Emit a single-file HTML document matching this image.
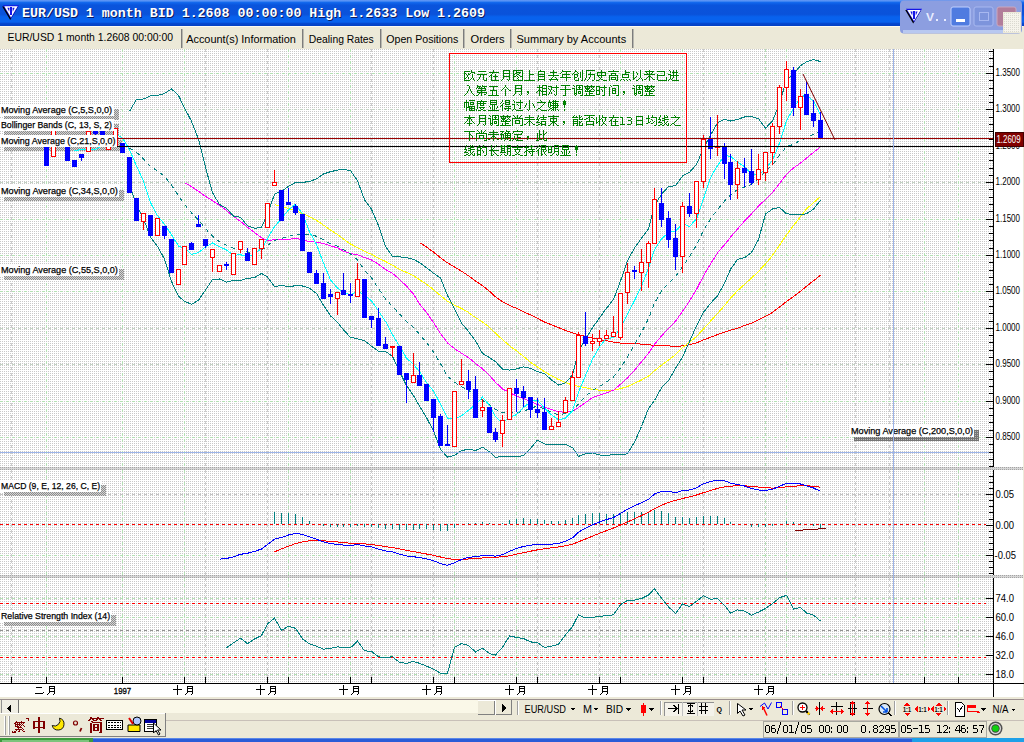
<!DOCTYPE html><html><head><meta charset="utf-8"><style>html,body{margin:0;padding:0;width:1024px;height:742px;overflow:hidden;background:#ece9d8}svg{display:block}</style></head><body>
<svg width="1024" height="742" viewBox="0 0 1024 742" shape-rendering="crispEdges">
<defs>
<pattern id="dots" width="2" height="2" patternUnits="userSpaceOnUse"><rect width="2" height="2" fill="#fff"/><rect x="0" y="1" width="1" height="1" fill="#c8c8c8"/></pattern>
<pattern id="shade" width="2" height="2" patternUnits="userSpaceOnUse"><rect width="2" height="2" fill="#c8c8c8"/><rect x="0" y="0" width="1" height="1" fill="#8c8c8c"/><rect x="1" y="1" width="1" height="1" fill="#8c8c8c"/></pattern>
<pattern id="shadeL" width="2" height="2" patternUnits="userSpaceOnUse"><rect width="2" height="2" fill="#d4d4d4"/><rect x="0" y="0" width="1" height="1" fill="#8c8c8c"/><rect x="1" y="1" width="1" height="1" fill="#8c8c8c"/></pattern>
<pattern id="shadeD" width="2" height="2" patternUnits="userSpaceOnUse"><rect width="2" height="2" fill="#747474"/><rect x="1" y="1" width="1" height="1" fill="#b8b8b8"/></pattern>
<pattern id="sepdots" width="2" height="1" patternUnits="userSpaceOnUse"><rect width="1" height="1" fill="#a4a4a4"/></pattern>
<linearGradient id="tb" x1="0" y1="0" x2="0" y2="26" gradientUnits="userSpaceOnUse">
<stop offset="0" stop-color="#6a9cf6"/><stop offset="0.06" stop-color="#3a82f2"/><stop offset="0.1" stop-color="#1066ec"/><stop offset="0.2" stop-color="#0a54dc"/><stop offset="0.55" stop-color="#0a52da"/><stop offset="0.65" stop-color="#0862ee"/><stop offset="0.85" stop-color="#0862ee"/><stop offset="0.9" stop-color="#0548d0"/><stop offset="1" stop-color="#0440c4"/></linearGradient>
</defs>
<rect x="0" y="0" width="1024" height="26" fill="url(#tb)" />
<path d="M2.2 6.4h16l-8 13.5z" fill="#000" shape-rendering="auto"/>
<path d="M3 5.2h16l-8 13.5z" fill="#1414e6" shape-rendering="auto"/>
<path d="M4.3 6.300000000000001h13.4l-6.7 11.2z" fill="#fff" shape-rendering="auto"/>
<path d="M7.3 7.800000000000001h2.2l-0.3 4zM14.7 7.800000000000001h-2.2l0.3 4z" fill="#1414e6" shape-rendering="auto"/>
<rect x="10.4" y="7.4" width="1.2" height="8" fill="#1414e6" />
<text x="23" y="18" font-family="Liberation Mono" font-size="13.5" font-weight="bold" fill="#0a1a60" text-anchor="start" textLength="463" lengthAdjust="spacingAndGlyphs" >EUR/USD 1 month BID 1.2608 00:00:00 High 1.2633 Low 1.2609</text>
<text x="22" y="17" font-family="Liberation Mono" font-size="13.5" font-weight="bold" fill="#fff" text-anchor="start" textLength="463" lengthAdjust="spacingAndGlyphs" >EUR/USD 1 month BID 1.2608 00:00:00 High 1.2633 Low 1.2609</text>
<rect x="0" y="26" width="1024" height="23" fill="#ece9d8" />
<rect x="0" y="26" width="1024" height="1" fill="#fbfaf2" />
<text x="7.5" y="41" font-family="Liberation Sans" font-size="11" font-weight="normal" fill="#000" text-anchor="start" textLength="165.5" lengthAdjust="spacingAndGlyphs" >EUR/USD 1 month 1.2608 00:00:00</text>
<rect x="181" y="29" width="1" height="19" fill="#7c7c7c" />
<rect x="182" y="29" width="1" height="19" fill="#b8b8b0" />
<text x="186.2" y="43" font-family="Liberation Sans" font-size="11" font-weight="normal" fill="#000" text-anchor="start" textLength="109.7" lengthAdjust="spacingAndGlyphs" >Account(s) Information</text>
<rect x="302" y="29" width="1" height="19" fill="#7c7c7c" />
<rect x="303" y="29" width="1" height="19" fill="#b8b8b0" />
<text x="308.8" y="43" font-family="Liberation Sans" font-size="11" font-weight="normal" fill="#000" text-anchor="start" textLength="65" lengthAdjust="spacingAndGlyphs" >Dealing Rates</text>
<rect x="380" y="29" width="1" height="19" fill="#7c7c7c" />
<rect x="381" y="29" width="1" height="19" fill="#b8b8b0" />
<text x="386.3" y="43" font-family="Liberation Sans" font-size="11" font-weight="normal" fill="#000" text-anchor="start" textLength="72" lengthAdjust="spacingAndGlyphs" >Open Positions</text>
<rect x="463" y="29" width="1" height="19" fill="#7c7c7c" />
<rect x="464" y="29" width="1" height="19" fill="#b8b8b0" />
<text x="470.6" y="43" font-family="Liberation Sans" font-size="11" font-weight="normal" fill="#000" text-anchor="start" textLength="34" lengthAdjust="spacingAndGlyphs" >Orders</text>
<rect x="510" y="29" width="1" height="19" fill="#7c7c7c" />
<rect x="511" y="29" width="1" height="19" fill="#b8b8b0" />
<text x="516.5" y="43" font-family="Liberation Sans" font-size="11" font-weight="normal" fill="#000" text-anchor="start" textLength="109.7" lengthAdjust="spacingAndGlyphs" >Summary by Accounts</text>
<rect x="632" y="29" width="1" height="19" fill="#7c7c7c" />
<rect x="633" y="29" width="1" height="19" fill="#b8b8b0" />
<rect x="0" y="49" width="993" height="634" fill="url(#dots)" />
<rect x="993" y="49" width="31" height="648" fill="#fff" />
<rect x="0" y="684" width="993" height="13" fill="#fff" />
<rect x="1023" y="26" width="1" height="672" fill="#ece9d8" />
<line x1="46.5" y1="49" x2="46.5" y2="467" stroke="#b4e2b4" stroke-width="1" stroke-dasharray="3,3"/>
<line x1="46.5" y1="470" x2="46.5" y2="575" stroke="#b4e2b4" stroke-width="1" stroke-dasharray="3,3"/>
<line x1="46.5" y1="578" x2="46.5" y2="683" stroke="#b4e2b4" stroke-width="1" stroke-dasharray="3,3"/>
<line x1="122.5" y1="49" x2="122.5" y2="467" stroke="#b4e2b4" stroke-width="1" stroke-dasharray="3,3"/>
<line x1="122.5" y1="470" x2="122.5" y2="575" stroke="#b4e2b4" stroke-width="1" stroke-dasharray="3,3"/>
<line x1="122.5" y1="578" x2="122.5" y2="683" stroke="#b4e2b4" stroke-width="1" stroke-dasharray="3,3"/>
<line x1="184.5" y1="49" x2="184.5" y2="467" stroke="#b4e2b4" stroke-width="1" stroke-dasharray="3,3"/>
<line x1="184.5" y1="470" x2="184.5" y2="575" stroke="#b4e2b4" stroke-width="1" stroke-dasharray="3,3"/>
<line x1="184.5" y1="578" x2="184.5" y2="683" stroke="#b4e2b4" stroke-width="1" stroke-dasharray="3,3"/>
<line x1="288.5" y1="49" x2="288.5" y2="467" stroke="#b4e2b4" stroke-width="1" stroke-dasharray="3,3"/>
<line x1="288.5" y1="470" x2="288.5" y2="575" stroke="#b4e2b4" stroke-width="1" stroke-dasharray="3,3"/>
<line x1="288.5" y1="578" x2="288.5" y2="683" stroke="#b4e2b4" stroke-width="1" stroke-dasharray="3,3"/>
<line x1="350.5" y1="49" x2="350.5" y2="467" stroke="#b4e2b4" stroke-width="1" stroke-dasharray="3,3"/>
<line x1="350.5" y1="470" x2="350.5" y2="575" stroke="#b4e2b4" stroke-width="1" stroke-dasharray="3,3"/>
<line x1="350.5" y1="578" x2="350.5" y2="683" stroke="#b4e2b4" stroke-width="1" stroke-dasharray="3,3"/>
<line x1="454.5" y1="49" x2="454.5" y2="467" stroke="#b4e2b4" stroke-width="1" stroke-dasharray="3,3"/>
<line x1="454.5" y1="470" x2="454.5" y2="575" stroke="#b4e2b4" stroke-width="1" stroke-dasharray="3,3"/>
<line x1="454.5" y1="578" x2="454.5" y2="683" stroke="#b4e2b4" stroke-width="1" stroke-dasharray="3,3"/>
<line x1="516.5" y1="49" x2="516.5" y2="467" stroke="#b4e2b4" stroke-width="1" stroke-dasharray="3,3"/>
<line x1="516.5" y1="470" x2="516.5" y2="575" stroke="#b4e2b4" stroke-width="1" stroke-dasharray="3,3"/>
<line x1="516.5" y1="578" x2="516.5" y2="683" stroke="#b4e2b4" stroke-width="1" stroke-dasharray="3,3"/>
<line x1="620.5" y1="49" x2="620.5" y2="467" stroke="#b4e2b4" stroke-width="1" stroke-dasharray="3,3"/>
<line x1="620.5" y1="470" x2="620.5" y2="575" stroke="#b4e2b4" stroke-width="1" stroke-dasharray="3,3"/>
<line x1="620.5" y1="578" x2="620.5" y2="683" stroke="#b4e2b4" stroke-width="1" stroke-dasharray="3,3"/>
<line x1="682.5" y1="49" x2="682.5" y2="467" stroke="#b4e2b4" stroke-width="1" stroke-dasharray="3,3"/>
<line x1="682.5" y1="470" x2="682.5" y2="575" stroke="#b4e2b4" stroke-width="1" stroke-dasharray="3,3"/>
<line x1="682.5" y1="578" x2="682.5" y2="683" stroke="#b4e2b4" stroke-width="1" stroke-dasharray="3,3"/>
<line x1="765.5" y1="49" x2="765.5" y2="467" stroke="#b4e2b4" stroke-width="1" stroke-dasharray="3,3"/>
<line x1="765.5" y1="470" x2="765.5" y2="575" stroke="#b4e2b4" stroke-width="1" stroke-dasharray="3,3"/>
<line x1="765.5" y1="578" x2="765.5" y2="683" stroke="#b4e2b4" stroke-width="1" stroke-dasharray="3,3"/>
<line x1="786.5" y1="49" x2="786.5" y2="467" stroke="#b4e2b4" stroke-width="1" stroke-dasharray="3,3"/>
<line x1="786.5" y1="470" x2="786.5" y2="575" stroke="#b4e2b4" stroke-width="1" stroke-dasharray="3,3"/>
<line x1="786.5" y1="578" x2="786.5" y2="683" stroke="#b4e2b4" stroke-width="1" stroke-dasharray="3,3"/>
<line x1="924.5" y1="49" x2="924.5" y2="467" stroke="#b4e2b4" stroke-width="1" stroke-dasharray="3,3"/>
<line x1="924.5" y1="470" x2="924.5" y2="575" stroke="#b4e2b4" stroke-width="1" stroke-dasharray="3,3"/>
<line x1="924.5" y1="578" x2="924.5" y2="683" stroke="#b4e2b4" stroke-width="1" stroke-dasharray="3,3"/>
<line x1="958.5" y1="49" x2="958.5" y2="467" stroke="#b4e2b4" stroke-width="1" stroke-dasharray="3,3"/>
<line x1="958.5" y1="470" x2="958.5" y2="575" stroke="#b4e2b4" stroke-width="1" stroke-dasharray="3,3"/>
<line x1="958.5" y1="578" x2="958.5" y2="683" stroke="#b4e2b4" stroke-width="1" stroke-dasharray="3,3"/>
<line x1="11.5" y1="49" x2="11.5" y2="467" stroke="#cccccc" stroke-width="1" stroke-dasharray="3,3"/>
<line x1="11.5" y1="470" x2="11.5" y2="575" stroke="#cccccc" stroke-width="1" stroke-dasharray="3,3"/>
<line x1="11.5" y1="578" x2="11.5" y2="683" stroke="#cccccc" stroke-width="1" stroke-dasharray="3,3"/>
<line x1="205.5" y1="49" x2="205.5" y2="467" stroke="#cccccc" stroke-width="1" stroke-dasharray="3,3"/>
<line x1="205.5" y1="470" x2="205.5" y2="575" stroke="#cccccc" stroke-width="1" stroke-dasharray="3,3"/>
<line x1="205.5" y1="578" x2="205.5" y2="683" stroke="#cccccc" stroke-width="1" stroke-dasharray="3,3"/>
<line x1="267.5" y1="49" x2="267.5" y2="467" stroke="#cccccc" stroke-width="1" stroke-dasharray="3,3"/>
<line x1="267.5" y1="470" x2="267.5" y2="575" stroke="#cccccc" stroke-width="1" stroke-dasharray="3,3"/>
<line x1="267.5" y1="578" x2="267.5" y2="683" stroke="#cccccc" stroke-width="1" stroke-dasharray="3,3"/>
<line x1="371.5" y1="49" x2="371.5" y2="467" stroke="#cccccc" stroke-width="1" stroke-dasharray="3,3"/>
<line x1="371.5" y1="470" x2="371.5" y2="575" stroke="#cccccc" stroke-width="1" stroke-dasharray="3,3"/>
<line x1="371.5" y1="578" x2="371.5" y2="683" stroke="#cccccc" stroke-width="1" stroke-dasharray="3,3"/>
<line x1="433.5" y1="49" x2="433.5" y2="467" stroke="#cccccc" stroke-width="1" stroke-dasharray="3,3"/>
<line x1="433.5" y1="470" x2="433.5" y2="575" stroke="#cccccc" stroke-width="1" stroke-dasharray="3,3"/>
<line x1="433.5" y1="578" x2="433.5" y2="683" stroke="#cccccc" stroke-width="1" stroke-dasharray="3,3"/>
<line x1="537.5" y1="49" x2="537.5" y2="467" stroke="#cccccc" stroke-width="1" stroke-dasharray="3,3"/>
<line x1="537.5" y1="470" x2="537.5" y2="575" stroke="#cccccc" stroke-width="1" stroke-dasharray="3,3"/>
<line x1="537.5" y1="578" x2="537.5" y2="683" stroke="#cccccc" stroke-width="1" stroke-dasharray="3,3"/>
<line x1="599.5" y1="49" x2="599.5" y2="467" stroke="#cccccc" stroke-width="1" stroke-dasharray="3,3"/>
<line x1="599.5" y1="470" x2="599.5" y2="575" stroke="#cccccc" stroke-width="1" stroke-dasharray="3,3"/>
<line x1="599.5" y1="578" x2="599.5" y2="683" stroke="#cccccc" stroke-width="1" stroke-dasharray="3,3"/>
<line x1="703.5" y1="49" x2="703.5" y2="467" stroke="#cccccc" stroke-width="1" stroke-dasharray="3,3"/>
<line x1="703.5" y1="470" x2="703.5" y2="575" stroke="#cccccc" stroke-width="1" stroke-dasharray="3,3"/>
<line x1="703.5" y1="578" x2="703.5" y2="683" stroke="#cccccc" stroke-width="1" stroke-dasharray="3,3"/>
<line x1="855.5" y1="49" x2="855.5" y2="467" stroke="#cccccc" stroke-width="1" stroke-dasharray="3,3"/>
<line x1="855.5" y1="470" x2="855.5" y2="575" stroke="#cccccc" stroke-width="1" stroke-dasharray="3,3"/>
<line x1="855.5" y1="578" x2="855.5" y2="683" stroke="#cccccc" stroke-width="1" stroke-dasharray="3,3"/>
<line x1="889.5" y1="49" x2="889.5" y2="467" stroke="#cccccc" stroke-width="1" stroke-dasharray="3,3"/>
<line x1="889.5" y1="470" x2="889.5" y2="575" stroke="#cccccc" stroke-width="1" stroke-dasharray="3,3"/>
<line x1="889.5" y1="578" x2="889.5" y2="683" stroke="#cccccc" stroke-width="1" stroke-dasharray="3,3"/>
<line x1="0" y1="73.5" x2="986" y2="73.5" stroke="#b4e2b4" stroke-width="1" stroke-dasharray="3,3"/>
<line x1="0" y1="109.5" x2="986" y2="109.5" stroke="#c4d4c4" stroke-width="1" stroke-dasharray="3,3"/>
<line x1="0" y1="146.5" x2="986" y2="146.5" stroke="#b4e2b4" stroke-width="1" stroke-dasharray="3,3"/>
<line x1="0" y1="182.5" x2="986" y2="182.5" stroke="#c4d4c4" stroke-width="1" stroke-dasharray="3,3"/>
<line x1="0" y1="219.5" x2="986" y2="219.5" stroke="#b4e2b4" stroke-width="1" stroke-dasharray="3,3"/>
<line x1="0" y1="255.5" x2="986" y2="255.5" stroke="#b4e2b4" stroke-width="1" stroke-dasharray="3,3"/>
<line x1="0" y1="291.5" x2="986" y2="291.5" stroke="#b4e2b4" stroke-width="1" stroke-dasharray="3,3"/>
<line x1="0" y1="328.5" x2="986" y2="328.5" stroke="#c4d4c4" stroke-width="1" stroke-dasharray="3,3"/>
<line x1="0" y1="364.5" x2="986" y2="364.5" stroke="#c4d4c4" stroke-width="1" stroke-dasharray="3,3"/>
<line x1="0" y1="401.5" x2="986" y2="401.5" stroke="#b4e2b4" stroke-width="1" stroke-dasharray="3,3"/>
<line x1="0" y1="437.5" x2="986" y2="437.5" stroke="#b4e2b4" stroke-width="1" stroke-dasharray="3,3"/>
<svg x="0" y="49" width="993" height="418" viewBox="0 49 993 418" overflow="hidden">
<rect x="113.6" y="108.5" width="5" height="11" fill="url(#shadeL)" />
<rect x="4" y="115.5" width="109.6" height="4" fill="url(#shadeL)" />
<rect x="113.6" y="124" width="5" height="11" fill="url(#shadeL)" />
<rect x="4" y="131" width="109.6" height="4" fill="url(#shadeL)" />
<rect x="116.8" y="139.5" width="5" height="11" fill="url(#shadeL)" />
<rect x="4" y="146.5" width="112.8" height="4" fill="url(#shadeL)" />
<rect x="119" y="190" width="5" height="11" fill="url(#shadeL)" />
<rect x="4" y="197" width="115" height="4" fill="url(#shadeL)" />
<rect x="119.4" y="269" width="5" height="11" fill="url(#shadeL)" />
<rect x="4" y="276" width="115.4" height="4" fill="url(#shadeL)" />
<polyline points="419.5,242.6 426.5,246.9 433.5,252.1 440.5,257.7 447.5,262.9 454.5,267.0 461.5,271.1 468.5,275.8 475.5,280.9 482.5,285.8 489.5,291.2 495.5,296.8 502.5,301.7 509.5,305.3 516.5,308.4 523.5,311.8 530.5,314.9 537.5,318.4 544.5,322.0 551.5,324.8 558.5,327.6 565.5,330.4 572.5,332.7 578.5,334.7 585.5,336.5 592.5,338.1 599.5,339.5 606.5,340.7 613.5,342.2 620.5,343.1 627.5,343.3 634.5,343.7 641.5,344.1 648.5,344.9 654.5,345.2 661.5,345.1 668.5,345.8 675.5,346.6 682.5,345.8 689.5,344.7 696.5,342.8 703.5,339.9 710.5,337.3 717.5,334.6 724.5,332.2 730.5,330.2 737.5,328.2 744.5,325.6 751.5,323.1 758.5,319.9 765.5,316.4 772.5,312.4 779.5,307.1 786.5,301.5 793.5,296.6 800.5,291.4 806.5,286.2 813.5,280.8 820.5,275.2" fill="none" stroke="#ff0000" stroke-width="1" />
<polyline points="274.5,204.7 281.5,206.4 288.5,208.6 295.5,210.8 302.5,213.5 309.5,216.6 316.5,220.3 323.5,225.2 330.5,230.0 337.5,234.5 343.5,239.1 350.5,244.0 357.5,247.7 364.5,251.4 371.5,254.3 378.5,258.2 385.5,261.5 392.5,265.3 399.5,269.3 406.5,272.5 413.5,275.6 419.5,279.7 426.5,284.1 433.5,289.7 440.5,295.6 447.5,301.3 454.5,305.1 461.5,308.5 468.5,312.5 475.5,317.6 482.5,322.0 489.5,327.4 495.5,333.2 502.5,339.6 509.5,345.7 516.5,350.8 523.5,356.4 530.5,362.3 537.5,367.0 544.5,371.6 551.5,375.8 558.5,379.5 565.5,382.6 572.5,385.1 578.5,386.3 585.5,387.7 592.5,389.5 599.5,390.1 606.5,390.6 613.5,390.2 620.5,388.6 627.5,386.5 634.5,383.4 641.5,380.0 648.5,376.1 654.5,370.7 661.5,365.3 668.5,360.1 675.5,354.6 682.5,347.5 689.5,342.3 696.5,336.4 703.5,329.0 710.5,321.2 717.5,313.5 724.5,305.6 730.5,298.1 737.5,290.7 744.5,284.3 751.5,278.1 758.5,271.4 765.5,263.8 772.5,255.4 779.5,245.3 786.5,234.8 793.5,225.6 800.5,216.7 806.5,208.9 813.5,202.6 820.5,196.5" fill="none" stroke="#ffff00" stroke-width="1" />
<polyline points="184.5,182.6 191.5,186.6 198.5,191.3 205.5,196.4 212.5,200.7 219.5,205.4 226.5,210.5 233.5,216.4 240.5,221.5 247.5,227.2 254.5,232.5 261.5,237.8 267.5,240.3 274.5,239.8 281.5,239.8 288.5,239.4 295.5,238.3 302.5,239.8 309.5,241.6 316.5,242.1 323.5,243.5 330.5,245.8 337.5,247.9 343.5,251.1 350.5,253.5 357.5,254.9 364.5,257.4 371.5,260.0 378.5,264.3 385.5,269.4 392.5,273.4 399.5,279.4 406.5,286.1 413.5,294.2 419.5,303.9 426.5,312.4 433.5,322.5 440.5,333.6 447.5,342.9 454.5,348.6 461.5,353.2 468.5,357.6 475.5,363.4 482.5,368.9 489.5,375.5 495.5,382.3 502.5,389.0 509.5,392.4 516.5,396.0 523.5,398.5 530.5,401.4 537.5,404.6 544.5,407.2 551.5,409.5 558.5,411.7 565.5,412.4 572.5,411.4 578.5,407.5 585.5,402.6 592.5,397.7 599.5,395.1 606.5,392.9 613.5,390.2 620.5,384.3 627.5,377.9 634.5,370.2 641.5,361.8 648.5,353.3 654.5,344.3 661.5,336.0 668.5,328.5 675.5,321.2 682.5,311.4 689.5,301.1 696.5,289.4 703.5,275.9 710.5,263.9 717.5,252.9 724.5,244.8 730.5,237.2 737.5,229.0 744.5,221.1 751.5,213.8 758.5,206.1 765.5,199.3 772.5,192.4 779.5,183.6 786.5,174.4 793.5,168.0 800.5,163.1 806.5,158.1 813.5,152.4 820.5,146.8" fill="none" stroke="#ff00ff" stroke-width="1" />
<polyline points="129.5,111.4 136.5,99.4 143.5,99.0 150.5,95.9 157.5,95.4 164.5,93.5 171.5,88.9 178.5,95.4 184.5,107.9 191.5,121.3 198.5,139.3 205.5,167.4 212.5,192.8 219.5,204.5 226.5,208.2 233.5,216.2 240.5,217.3 247.5,225.7 254.5,228.3 261.5,227.5 267.5,213.8 274.5,194.3 281.5,191.2 288.5,186.4 295.5,182.4 302.5,182.4 309.5,181.5 316.5,178.9 323.5,174.0 330.5,171.7 337.5,170.1 343.5,169.4 350.5,170.5 357.5,180.8 364.5,199.7 371.5,209.3 378.5,225.7 385.5,246.5 392.5,256.4 399.5,256.8 406.5,257.6 413.5,259.3 419.5,262.6 426.5,267.7 433.5,273.2 440.5,278.0 447.5,295.5 454.5,308.7 461.5,323.1 468.5,331.4 475.5,340.8 482.5,353.4 489.5,357.7 495.5,361.6 502.5,369.2 509.5,370.1 516.5,368.9 523.5,366.8 530.5,368.4 537.5,371.7 544.5,373.7 551.5,379.9 558.5,385.0 565.5,382.8 572.5,374.9 578.5,351.2 585.5,339.1 592.5,327.8 599.5,317.8 606.5,308.3 613.5,299.4 620.5,281.1 627.5,260.7 634.5,248.0 641.5,238.3 648.5,228.7 654.5,205.9 661.5,194.2 668.5,186.7 675.5,185.5 682.5,176.0 689.5,172.3 696.5,164.5 703.5,148.3 710.5,135.0 717.5,123.0 724.5,119.2 730.5,121.0 737.5,119.4 744.5,117.0 751.5,116.6 758.5,118.6 765.5,128.3 772.5,121.0 779.5,103.3 786.5,79.7 793.5,74.0 800.5,65.6 806.5,61.9 813.5,59.5 820.5,61.6" fill="none" stroke="#008080" stroke-width="1" />
<polyline points="129.5,184.7 136.5,205.2 143.5,218.6 150.5,237.1 157.5,246.4 164.5,259.1 171.5,281.4 178.5,296.2 184.5,301.2 191.5,304.4 198.5,300.2 205.5,290.0 212.5,279.5 219.5,279.0 226.5,282.2 233.5,280.4 240.5,280.3 247.5,278.4 254.5,277.7 261.5,273.5 267.5,277.0 274.5,286.7 281.5,285.4 288.5,286.8 295.5,285.7 302.5,286.0 309.5,288.1 316.5,293.5 323.5,305.2 330.5,315.9 337.5,322.3 343.5,329.9 350.5,337.4 357.5,338.8 364.5,340.6 371.5,346.2 378.5,351.3 385.5,351.5 392.5,356.3 399.5,371.5 406.5,385.4 413.5,395.7 419.5,406.1 426.5,417.6 433.5,431.0 440.5,449.2 447.5,457.2 454.5,455.5 461.5,450.6 468.5,449.2 475.5,450.5 482.5,447.2 489.5,451.9 495.5,457.3 502.5,456.6 509.5,456.2 516.5,456.5 523.5,455.7 530.5,448.5 537.5,440.1 544.5,444.0 551.5,444.7 558.5,444.7 565.5,444.4 572.5,447.6 578.5,456.4 585.5,453.8 592.5,452.9 599.5,455.0 606.5,455.6 613.5,454.5 620.5,454.8 627.5,453.8 634.5,442.1 641.5,426.5 648.5,408.5 654.5,400.5 661.5,387.8 668.5,380.6 675.5,368.3 682.5,357.1 689.5,341.6 696.5,325.7 703.5,312.3 710.5,303.3 717.5,296.0 724.5,283.1 730.5,269.4 737.5,259.4 744.5,257.7 751.5,252.4 758.5,239.7 765.5,214.0 772.5,209.0 779.5,207.4 786.5,213.8 793.5,214.5 800.5,214.9 806.5,213.6 813.5,209.3 820.5,200.1" fill="none" stroke="#008080" stroke-width="1" />
<polyline points="129.5,148.0 136.5,152.3 143.5,158.8 150.5,166.5 157.5,170.9 164.5,176.3 171.5,185.2 178.5,195.8 184.5,204.5 191.5,212.9 198.5,219.8 205.5,228.7 212.5,236.1 219.5,241.8 226.5,245.2 233.5,248.3 240.5,248.8 247.5,252.0 254.5,253.0 261.5,250.5 267.5,245.4 274.5,240.5 281.5,238.3 288.5,236.6 295.5,234.1 302.5,234.2 309.5,234.8 316.5,236.2 323.5,239.6 330.5,243.8 337.5,246.2 343.5,249.7 350.5,254.0 357.5,259.8 364.5,270.2 371.5,277.7 378.5,288.5 385.5,299.0 392.5,306.3 399.5,314.1 406.5,321.5 413.5,327.5 419.5,334.3 426.5,342.6 433.5,352.1 440.5,363.6 447.5,376.3 454.5,382.1 461.5,386.9 468.5,390.3 475.5,395.6 482.5,400.3 489.5,404.8 495.5,409.4 502.5,412.9 509.5,413.2 516.5,412.7 523.5,411.2 530.5,408.5 537.5,405.9 544.5,408.9 551.5,412.3 558.5,414.9 565.5,413.6 572.5,411.3 578.5,403.8 585.5,396.4 592.5,390.3 599.5,386.4 606.5,381.9 613.5,376.9 620.5,368.0 627.5,357.2 634.5,345.0 641.5,332.4 648.5,318.6 654.5,303.2 661.5,291.0 668.5,283.6 675.5,276.9 682.5,266.5 689.5,256.9 696.5,245.1 703.5,230.3 710.5,219.1 717.5,209.5 724.5,201.2 730.5,195.2 737.5,189.4 744.5,187.3 751.5,184.5 758.5,179.1 765.5,171.2 772.5,165.0 779.5,155.3 786.5,146.7 793.5,144.3 800.5,140.3 806.5,137.7 813.5,134.4 820.5,130.8" fill="none" stroke="#008080" stroke-width="1" stroke-dasharray="4,4" />
<polyline points="74.5,151.0 81.5,149.3 88.5,149.9 95.5,149.3 102.5,145.2 108.5,139.5 115.5,133.8 122.5,138.1 129.5,149.8 136.5,165.9 143.5,181.1 150.5,202.6 157.5,215.6 164.5,224.4 171.5,234.8 178.5,246.0 184.5,248.2 191.5,254.3 198.5,252.6 205.5,247.0 212.5,243.0 219.5,246.7 226.5,249.9 233.5,255.3 240.5,254.7 247.5,256.9 254.5,253.7 261.5,248.6 267.5,238.6 274.5,226.7 281.5,218.7 288.5,209.9 295.5,204.3 302.5,213.8 309.5,231.8 316.5,244.4 323.5,263.1 330.5,279.9 337.5,288.1 343.5,292.4 350.5,294.7 357.5,291.1 364.5,295.3 371.5,300.8 378.5,310.9 385.5,321.4 392.5,334.7 399.5,346.1 406.5,358.2 413.5,364.3 419.5,371.7 426.5,382.5 433.5,391.0 440.5,404.2 447.5,418.1 454.5,419.5 461.5,415.8 468.5,410.3 475.5,404.7 482.5,397.1 489.5,405.3 495.5,416.8 502.5,423.0 509.5,417.4 516.5,414.6 523.5,407.6 530.5,401.7 537.5,400.0 544.5,408.2 551.5,414.8 558.5,419.8 565.5,418.0 572.5,411.0 578.5,392.1 585.5,375.5 592.5,359.2 599.5,346.8 606.5,338.3 613.5,337.8 620.5,327.7 627.5,313.9 634.5,300.6 641.5,286.1 648.5,268.2 654.5,249.5 661.5,238.9 668.5,232.5 675.5,231.1 682.5,223.8 689.5,226.5 696.5,218.9 703.5,199.0 710.5,177.6 717.5,165.6 724.5,155.6 730.5,156.3 737.5,162.1 744.5,166.7 751.5,173.9 758.5,175.2 765.5,168.7 772.5,160.2 779.5,143.4 786.5,120.7 793.5,108.3 800.5,97.2 806.5,94.8 813.5,101.2 820.5,115.0" fill="none" stroke="#00ffff" stroke-width="1" />
<rect x="46" y="146" width="1" height="20" fill="#0000ff" />
<rect x="44" y="146" width="5" height="20" fill="#0000ff" />
<rect x="53" y="128" width="1" height="29" fill="#ff0000" />
<rect x="51" y="128" width="5" height="29" fill="#ff0000" />
<rect x="52" y="129" width="3" height="27" fill="#fff" />
<rect x="60" y="136" width="1" height="10" fill="#ff0000" />
<rect x="58" y="136" width="5" height="10" fill="#ff0000" />
<rect x="59" y="137" width="3" height="8" fill="#fff" />
<rect x="67" y="147" width="1" height="14" fill="#0000ff" />
<rect x="65" y="147" width="5" height="14" fill="#0000ff" />
<rect x="74" y="160" width="1" height="7" fill="#0000ff" />
<rect x="72" y="160" width="5" height="7" fill="#0000ff" />
<rect x="81" y="154" width="1" height="7" fill="#0000ff" />
<rect x="79" y="154" width="5" height="4" fill="#0000ff" />
<rect x="88" y="131" width="1" height="21" fill="#ff0000" />
<rect x="86" y="131" width="5" height="21" fill="#ff0000" />
<rect x="87" y="132" width="3" height="19" fill="#fff" />
<rect x="95" y="131" width="1" height="7" fill="#0000ff" />
<rect x="93" y="131" width="5" height="3" fill="#0000ff" />
<rect x="102" y="130" width="1" height="11" fill="#0000ff" />
<rect x="100" y="130" width="5" height="11" fill="#0000ff" />
<rect x="108" y="137" width="1" height="13" fill="#ff0000" />
<rect x="106" y="137" width="5" height="13" fill="#ff0000" />
<rect x="107" y="138" width="3" height="11" fill="#fff" />
<rect x="115" y="128" width="1" height="18" fill="#ff0000" />
<rect x="113" y="128" width="5" height="18" fill="#ff0000" />
<rect x="114" y="129" width="3" height="16" fill="#fff" />
<rect x="122" y="143" width="1" height="10" fill="#0000ff" />
<rect x="120" y="143" width="5" height="10" fill="#0000ff" />
<rect x="129" y="157" width="1" height="36" fill="#0000ff" />
<rect x="127" y="157" width="5" height="36" fill="#0000ff" />
<rect x="136" y="198" width="1" height="23" fill="#0000ff" />
<rect x="134" y="198" width="5" height="23" fill="#0000ff" />
<rect x="143" y="213" width="1" height="17" fill="#ff0000" />
<rect x="141" y="213" width="5" height="9" fill="#ff0000" />
<rect x="142" y="214" width="3" height="7" fill="#fff" />
<rect x="150" y="215" width="1" height="21" fill="#0000ff" />
<rect x="148" y="215" width="5" height="21" fill="#0000ff" />
<rect x="157" y="218" width="1" height="18" fill="#ff0000" />
<rect x="155" y="218" width="5" height="18" fill="#ff0000" />
<rect x="156" y="219" width="3" height="16" fill="#fff" />
<rect x="164" y="226" width="1" height="13" fill="#0000ff" />
<rect x="162" y="226" width="5" height="10" fill="#0000ff" />
<rect x="171" y="239" width="1" height="34" fill="#0000ff" />
<rect x="169" y="239" width="5" height="34" fill="#0000ff" />
<rect x="178" y="269" width="1" height="16" fill="#ff0000" />
<rect x="176" y="269" width="5" height="16" fill="#ff0000" />
<rect x="177" y="270" width="3" height="14" fill="#fff" />
<rect x="184" y="246" width="1" height="19" fill="#ff0000" />
<rect x="182" y="246" width="5" height="19" fill="#ff0000" />
<rect x="183" y="247" width="3" height="17" fill="#fff" />
<rect x="191" y="242" width="1" height="8" fill="#0000ff" />
<rect x="189" y="243" width="5" height="7" fill="#0000ff" />
<rect x="198" y="215" width="1" height="12" fill="#0000ff" />
<rect x="196" y="224" width="5" height="3" fill="#0000ff" />
<rect x="205" y="239" width="1" height="9" fill="#0000ff" />
<rect x="203" y="239" width="5" height="7" fill="#0000ff" />
<rect x="212" y="249" width="1" height="23" fill="#ff0000" />
<rect x="210" y="249" width="5" height="9" fill="#ff0000" />
<rect x="211" y="250" width="3" height="7" fill="#fff" />
<rect x="219" y="265" width="1" height="7" fill="#ff0000" />
<rect x="217" y="265" width="5" height="7" fill="#ff0000" />
<rect x="218" y="266" width="3" height="5" fill="#fff" />
<rect x="226" y="262" width="1" height="8" fill="#0000ff" />
<rect x="224" y="264" width="5" height="2" fill="#0000ff" />
<rect x="233" y="253" width="1" height="22" fill="#ff0000" />
<rect x="231" y="253" width="5" height="22" fill="#ff0000" />
<rect x="232" y="254" width="3" height="20" fill="#fff" />
<rect x="240" y="241" width="1" height="12" fill="#ff0000" />
<rect x="238" y="241" width="5" height="9" fill="#ff0000" />
<rect x="239" y="242" width="3" height="7" fill="#fff" />
<rect x="247" y="248" width="1" height="13" fill="#0000ff" />
<rect x="245" y="253" width="5" height="8" fill="#0000ff" />
<rect x="254" y="248" width="1" height="17" fill="#ff0000" />
<rect x="252" y="248" width="5" height="17" fill="#ff0000" />
<rect x="253" y="249" width="3" height="15" fill="#fff" />
<rect x="261" y="239" width="1" height="20" fill="#ff0000" />
<rect x="259" y="239" width="5" height="10" fill="#ff0000" />
<rect x="260" y="240" width="3" height="8" fill="#fff" />
<rect x="267" y="203" width="1" height="25" fill="#ff0000" />
<rect x="265" y="203" width="5" height="25" fill="#ff0000" />
<rect x="266" y="204" width="3" height="23" fill="#fff" />
<rect x="274" y="170" width="1" height="16" fill="#ff0000" />
<rect x="272" y="182" width="5" height="4" fill="#ff0000" />
<rect x="273" y="183" width="3" height="2" fill="#fff" />
<rect x="281" y="190" width="1" height="31" fill="#0000ff" />
<rect x="279" y="190" width="5" height="31" fill="#0000ff" />
<rect x="288" y="188" width="1" height="17" fill="#0000ff" />
<rect x="286" y="202" width="5" height="3" fill="#0000ff" />
<rect x="295" y="204" width="1" height="11" fill="#0000ff" />
<rect x="293" y="206" width="5" height="7" fill="#0000ff" />
<rect x="302" y="214" width="1" height="37" fill="#0000ff" />
<rect x="300" y="214" width="5" height="37" fill="#0000ff" />
<rect x="309" y="252" width="1" height="21" fill="#0000ff" />
<rect x="307" y="252" width="5" height="21" fill="#0000ff" />
<rect x="316" y="270" width="1" height="14" fill="#0000ff" />
<rect x="314" y="273" width="5" height="11" fill="#0000ff" />
<rect x="323" y="273" width="1" height="26" fill="#0000ff" />
<rect x="321" y="283" width="5" height="16" fill="#0000ff" />
<rect x="330" y="289" width="1" height="15" fill="#0000ff" />
<rect x="328" y="294" width="5" height="3" fill="#0000ff" />
<rect x="337" y="292" width="1" height="23" fill="#ff0000" />
<rect x="335" y="292" width="5" height="7" fill="#ff0000" />
<rect x="336" y="293" width="3" height="5" fill="#fff" />
<rect x="343" y="273" width="1" height="22" fill="#0000ff" />
<rect x="341" y="290" width="5" height="5" fill="#0000ff" />
<rect x="350" y="283" width="1" height="20" fill="#0000ff" />
<rect x="348" y="294" width="5" height="2" fill="#0000ff" />
<rect x="357" y="263" width="1" height="34" fill="#ff0000" />
<rect x="355" y="279" width="5" height="18" fill="#ff0000" />
<rect x="356" y="280" width="3" height="16" fill="#fff" />
<rect x="364" y="279" width="1" height="39" fill="#0000ff" />
<rect x="362" y="279" width="5" height="39" fill="#0000ff" />
<rect x="371" y="316" width="1" height="12" fill="#0000ff" />
<rect x="369" y="316" width="5" height="4" fill="#0000ff" />
<rect x="378" y="308" width="1" height="38" fill="#0000ff" />
<rect x="376" y="318" width="5" height="28" fill="#0000ff" />
<rect x="385" y="337" width="1" height="12" fill="#0000ff" />
<rect x="383" y="344" width="5" height="5" fill="#0000ff" />
<rect x="392" y="346" width="1" height="11" fill="#ff0000" />
<rect x="390" y="346" width="5" height="2" fill="#ff0000" />
<rect x="399" y="346" width="1" height="29" fill="#0000ff" />
<rect x="397" y="346" width="5" height="29" fill="#0000ff" />
<rect x="406" y="373" width="1" height="30" fill="#0000ff" />
<rect x="404" y="373" width="5" height="7" fill="#0000ff" />
<rect x="413" y="353" width="1" height="30" fill="#ff0000" />
<rect x="411" y="375" width="5" height="8" fill="#ff0000" />
<rect x="412" y="376" width="3" height="6" fill="#fff" />
<rect x="419" y="362" width="1" height="24" fill="#0000ff" />
<rect x="417" y="375" width="5" height="11" fill="#0000ff" />
<rect x="426" y="384" width="1" height="17" fill="#0000ff" />
<rect x="424" y="384" width="5" height="17" fill="#0000ff" />
<rect x="433" y="399" width="1" height="33" fill="#0000ff" />
<rect x="431" y="399" width="5" height="19" fill="#0000ff" />
<rect x="440" y="414" width="1" height="32" fill="#0000ff" />
<rect x="438" y="416" width="5" height="30" fill="#0000ff" />
<rect x="447" y="425" width="1" height="21" fill="#0000ff" />
<rect x="445" y="444" width="5" height="2" fill="#0000ff" />
<rect x="454" y="391" width="1" height="56" fill="#ff0000" />
<rect x="452" y="391" width="5" height="56" fill="#ff0000" />
<rect x="453" y="392" width="3" height="54" fill="#fff" />
<rect x="461" y="359" width="1" height="26" fill="#ff0000" />
<rect x="459" y="381" width="5" height="4" fill="#ff0000" />
<rect x="460" y="382" width="3" height="2" fill="#fff" />
<rect x="468" y="370" width="1" height="29" fill="#0000ff" />
<rect x="466" y="381" width="5" height="9" fill="#0000ff" />
<rect x="475" y="376" width="1" height="42" fill="#0000ff" />
<rect x="473" y="389" width="5" height="29" fill="#0000ff" />
<rect x="482" y="399" width="1" height="18" fill="#ff0000" />
<rect x="480" y="407" width="5" height="4" fill="#ff0000" />
<rect x="481" y="408" width="3" height="2" fill="#fff" />
<rect x="489" y="407" width="1" height="26" fill="#0000ff" />
<rect x="487" y="407" width="5" height="26" fill="#0000ff" />
<rect x="495" y="428" width="1" height="14" fill="#0000ff" />
<rect x="493" y="432" width="5" height="8" fill="#0000ff" />
<rect x="502" y="415" width="1" height="32" fill="#ff0000" />
<rect x="500" y="420" width="5" height="14" fill="#ff0000" />
<rect x="501" y="421" width="3" height="12" fill="#fff" />
<rect x="509" y="388" width="1" height="32" fill="#ff0000" />
<rect x="507" y="388" width="5" height="32" fill="#ff0000" />
<rect x="508" y="389" width="3" height="30" fill="#fff" />
<rect x="516" y="379" width="1" height="33" fill="#0000ff" />
<rect x="514" y="388" width="5" height="6" fill="#0000ff" />
<rect x="523" y="386" width="1" height="21" fill="#0000ff" />
<rect x="521" y="391" width="5" height="7" fill="#0000ff" />
<rect x="530" y="397" width="1" height="21" fill="#0000ff" />
<rect x="528" y="397" width="5" height="13" fill="#0000ff" />
<rect x="537" y="398" width="1" height="20" fill="#0000ff" />
<rect x="535" y="409" width="5" height="4" fill="#0000ff" />
<rect x="544" y="398" width="1" height="32" fill="#0000ff" />
<rect x="542" y="412" width="5" height="18" fill="#0000ff" />
<rect x="551" y="418" width="1" height="12" fill="#ff0000" />
<rect x="549" y="426" width="5" height="4" fill="#ff0000" />
<rect x="550" y="427" width="3" height="2" fill="#fff" />
<rect x="558" y="411" width="1" height="16" fill="#ff0000" />
<rect x="556" y="422" width="5" height="5" fill="#ff0000" />
<rect x="557" y="423" width="3" height="3" fill="#fff" />
<rect x="565" y="397" width="1" height="16" fill="#ff0000" />
<rect x="563" y="400" width="5" height="13" fill="#ff0000" />
<rect x="564" y="401" width="3" height="11" fill="#fff" />
<rect x="572" y="371" width="1" height="30" fill="#ff0000" />
<rect x="570" y="377" width="5" height="24" fill="#ff0000" />
<rect x="571" y="378" width="3" height="22" fill="#fff" />
<rect x="578" y="332" width="1" height="46" fill="#ff0000" />
<rect x="576" y="335" width="5" height="43" fill="#ff0000" />
<rect x="577" y="336" width="3" height="41" fill="#fff" />
<rect x="585" y="312" width="1" height="34" fill="#0000ff" />
<rect x="583" y="336" width="5" height="8" fill="#0000ff" />
<rect x="592" y="334" width="1" height="17" fill="#ff0000" />
<rect x="590" y="341" width="5" height="3" fill="#ff0000" />
<rect x="591" y="342" width="3" height="1" fill="#fff" />
<rect x="599" y="330" width="1" height="16" fill="#ff0000" />
<rect x="597" y="338" width="5" height="4" fill="#ff0000" />
<rect x="598" y="339" width="3" height="2" fill="#fff" />
<rect x="606" y="330" width="1" height="9" fill="#ff0000" />
<rect x="604" y="335" width="5" height="4" fill="#ff0000" />
<rect x="605" y="336" width="3" height="2" fill="#fff" />
<rect x="613" y="316" width="1" height="21" fill="#ff0000" />
<rect x="611" y="332" width="5" height="5" fill="#ff0000" />
<rect x="612" y="333" width="3" height="3" fill="#fff" />
<rect x="620" y="293" width="1" height="47" fill="#ff0000" />
<rect x="618" y="293" width="5" height="45" fill="#ff0000" />
<rect x="619" y="294" width="3" height="43" fill="#fff" />
<rect x="627" y="263" width="1" height="41" fill="#ff0000" />
<rect x="625" y="272" width="5" height="21" fill="#ff0000" />
<rect x="626" y="273" width="3" height="19" fill="#fff" />
<rect x="634" y="266" width="1" height="13" fill="#0000ff" />
<rect x="632" y="270" width="5" height="2" fill="#0000ff" />
<rect x="641" y="249" width="1" height="42" fill="#ff0000" />
<rect x="639" y="262" width="5" height="11" fill="#ff0000" />
<rect x="640" y="263" width="3" height="9" fill="#fff" />
<rect x="648" y="241" width="1" height="47" fill="#ff0000" />
<rect x="646" y="243" width="5" height="20" fill="#ff0000" />
<rect x="647" y="244" width="3" height="18" fill="#fff" />
<rect x="654" y="188" width="1" height="56" fill="#ff0000" />
<rect x="652" y="199" width="5" height="45" fill="#ff0000" />
<rect x="653" y="200" width="3" height="43" fill="#fff" />
<rect x="661" y="188" width="1" height="39" fill="#0000ff" />
<rect x="659" y="203" width="5" height="17" fill="#0000ff" />
<rect x="668" y="211" width="1" height="37" fill="#0000ff" />
<rect x="666" y="218" width="5" height="22" fill="#0000ff" />
<rect x="675" y="224" width="1" height="46" fill="#0000ff" />
<rect x="673" y="238" width="5" height="19" fill="#0000ff" />
<rect x="682" y="202" width="1" height="71" fill="#ff0000" />
<rect x="680" y="206" width="5" height="51" fill="#ff0000" />
<rect x="681" y="207" width="3" height="49" fill="#fff" />
<rect x="689" y="193" width="1" height="24" fill="#0000ff" />
<rect x="687" y="206" width="5" height="8" fill="#0000ff" />
<rect x="696" y="181" width="1" height="47" fill="#ff0000" />
<rect x="694" y="181" width="5" height="33" fill="#ff0000" />
<rect x="695" y="182" width="3" height="31" fill="#fff" />
<rect x="703" y="135" width="1" height="53" fill="#ff0000" />
<rect x="701" y="139" width="5" height="43" fill="#ff0000" />
<rect x="702" y="140" width="3" height="41" fill="#fff" />
<rect x="710" y="117" width="1" height="42" fill="#0000ff" />
<rect x="708" y="139" width="5" height="10" fill="#0000ff" />
<rect x="717" y="115" width="1" height="41" fill="#ff0000" />
<rect x="715" y="146" width="5" height="2" fill="#ff0000" />
<rect x="724" y="143" width="1" height="36" fill="#0000ff" />
<rect x="722" y="147" width="5" height="17" fill="#0000ff" />
<rect x="730" y="154" width="1" height="46" fill="#0000ff" />
<rect x="728" y="162" width="5" height="23" fill="#0000ff" />
<rect x="737" y="161" width="1" height="38" fill="#ff0000" />
<rect x="735" y="168" width="5" height="17" fill="#ff0000" />
<rect x="736" y="169" width="3" height="15" fill="#fff" />
<rect x="744" y="158" width="1" height="29" fill="#0000ff" />
<rect x="742" y="168" width="5" height="5" fill="#0000ff" />
<rect x="751" y="149" width="1" height="36" fill="#0000ff" />
<rect x="749" y="171" width="5" height="12" fill="#0000ff" />
<rect x="758" y="154" width="1" height="31" fill="#ff0000" />
<rect x="756" y="169" width="5" height="11" fill="#ff0000" />
<rect x="757" y="170" width="3" height="9" fill="#fff" />
<rect x="765" y="152" width="1" height="29" fill="#ff0000" />
<rect x="763" y="152" width="5" height="21" fill="#ff0000" />
<rect x="764" y="153" width="3" height="19" fill="#fff" />
<rect x="772" y="123" width="1" height="42" fill="#ff0000" />
<rect x="770" y="126" width="5" height="27" fill="#ff0000" />
<rect x="771" y="127" width="3" height="25" fill="#fff" />
<rect x="779" y="85" width="1" height="49" fill="#ff0000" />
<rect x="777" y="87" width="5" height="40" fill="#ff0000" />
<rect x="778" y="88" width="3" height="38" fill="#fff" />
<rect x="786" y="61" width="1" height="40" fill="#ff0000" />
<rect x="784" y="69" width="5" height="19" fill="#ff0000" />
<rect x="785" y="70" width="3" height="17" fill="#fff" />
<rect x="793" y="67" width="1" height="49" fill="#0000ff" />
<rect x="791" y="70" width="5" height="38" fill="#0000ff" />
<rect x="800" y="89" width="1" height="41" fill="#ff0000" />
<rect x="798" y="96" width="5" height="12" fill="#ff0000" />
<rect x="799" y="97" width="3" height="10" fill="#fff" />
<rect x="806" y="81" width="1" height="34" fill="#0000ff" />
<rect x="804" y="94" width="5" height="21" fill="#0000ff" />
<rect x="813" y="100" width="1" height="27" fill="#0000ff" />
<rect x="811" y="113" width="5" height="8" fill="#0000ff" />
<rect x="820" y="112" width="1" height="27" fill="#0000ff" />
<rect x="818" y="120" width="5" height="19" fill="#0000ff" />
</svg>
<rect x="0" y="138" width="993" height="1" fill="#980000" />
<rect x="0" y="146" width="993" height="1" fill="#000" />
<rect x="0" y="452" width="993" height="1" fill="#9cb4ea" />
<line x1="803" y1="74" x2="835" y2="140" stroke="#800000" stroke-width="1" shape-rendering="auto"/>
<rect x="449.5" y="53.5" width="237" height="109" fill="none" stroke="#ff0000" stroke-width="1"/>
<path d="M471 70h1v1h-1zM493 70h1v1h-1zM503 70h7v1h-7zM513 70h10v1h-10zM529 70h1v1h-1zM540 70h1v1h-1zM553 70h1v1h-1zM562 70h1v1h-1zM575 70h1v1h-1zM582 70h1v1h-1zM586 70h9v1h-9zM601 70h1v1h-1zM613 70h1v1h-1zM625 70h1v1h-1zM640 70h1v1h-1zM649 70h1v1h-1zM669 70h1v1h-1zM673 70h1v1h-1zM676 70h1v1h-1zM464 71h6v1h-6zM471 71h1v1h-1zM478 71h8v1h-8zM493 71h1v1h-1zM503 71h1v1h-1zM509 71h1v1h-1zM513 71h1v1h-1zM516 71h1v1h-1zM522 71h1v1h-1zM529 71h1v1h-1zM538 71h7v1h-7zM553 71h1v1h-1zM562 71h9v1h-9zM575 71h2v1h-2zM582 71h1v1h-1zM586 71h1v1h-1zM601 71h1v1h-1zM608 71h11v1h-11zM625 71h1v1h-1zM633 71h1v1h-1zM640 71h1v1h-1zM645 71h9v1h-9zM657 71h8v1h-8zM670 71h1v1h-1zM673 71h1v1h-1zM676 71h1v1h-1zM464 72h1v1h-1zM471 72h4v1h-4zM489 72h10v1h-10zM503 72h1v1h-1zM509 72h1v1h-1zM513 72h1v1h-1zM516 72h5v1h-5zM522 72h1v1h-1zM529 72h1v1h-1zM538 72h1v1h-1zM544 72h1v1h-1zM550 72h7v1h-7zM561 72h1v1h-1zM566 72h1v1h-1zM574 72h1v1h-1zM577 72h1v1h-1zM580 72h1v1h-1zM582 72h1v1h-1zM586 72h1v1h-1zM590 72h1v1h-1zM597 72h9v1h-9zM625 72h5v1h-5zM633 72h1v1h-1zM636 72h1v1h-1zM640 72h1v1h-1zM646 72h1v1h-1zM649 72h1v1h-1zM652 72h1v1h-1zM664 72h1v1h-1zM670 72h1v1h-1zM672 72h6v1h-6zM464 73h2v1h-2zM468 73h1v1h-1zM470 73h1v1h-1zM474 73h1v1h-1zM492 73h1v1h-1zM503 73h7v1h-7zM513 73h1v1h-1zM515 73h2v1h-2zM519 73h1v1h-1zM522 73h1v1h-1zM529 73h1v1h-1zM538 73h1v1h-1zM544 73h1v1h-1zM553 73h1v1h-1zM560 73h1v1h-1zM566 73h1v1h-1zM573 73h1v1h-1zM578 73h1v1h-1zM580 73h1v1h-1zM582 73h1v1h-1zM586 73h1v1h-1zM590 73h1v1h-1zM597 73h1v1h-1zM601 73h1v1h-1zM605 73h1v1h-1zM611 73h5v1h-5zM625 73h1v1h-1zM633 73h1v1h-1zM637 73h1v1h-1zM640 73h1v1h-1zM647 73h1v1h-1zM649 73h1v1h-1zM651 73h1v1h-1zM664 73h1v1h-1zM673 73h1v1h-1zM676 73h1v1h-1zM464 74h1v1h-1zM466 74h1v1h-1zM468 74h2v1h-2zM472 74h1v1h-1zM477 74h10v1h-10zM491 74h1v1h-1zM495 74h1v1h-1zM503 74h1v1h-1zM509 74h1v1h-1zM513 74h2v1h-2zM517 74h2v1h-2zM522 74h1v1h-1zM529 74h5v1h-5zM538 74h7v1h-7zM553 74h1v1h-1zM562 74h8v1h-8zM572 74h1v1h-1zM574 74h4v1h-4zM580 74h1v1h-1zM582 74h1v1h-1zM586 74h1v1h-1zM588 74h7v1h-7zM597 74h1v1h-1zM601 74h1v1h-1zM605 74h1v1h-1zM611 74h1v1h-1zM615 74h1v1h-1zM622 74h7v1h-7zM633 74h1v1h-1zM637 74h1v1h-1zM640 74h1v1h-1zM644 74h11v1h-11zM657 74h1v1h-1zM664 74h1v1h-1zM668 74h3v1h-3zM673 74h1v1h-1zM676 74h1v1h-1zM464 75h1v1h-1zM467 75h1v1h-1zM472 75h1v1h-1zM480 75h1v1h-1zM483 75h1v1h-1zM490 75h2v1h-2zM495 75h1v1h-1zM503 75h1v1h-1zM509 75h1v1h-1zM513 75h1v1h-1zM516 75h1v1h-1zM519 75h1v1h-1zM522 75h1v1h-1zM529 75h1v1h-1zM538 75h1v1h-1zM544 75h1v1h-1zM548 75h11v1h-11zM562 75h1v1h-1zM566 75h1v1h-1zM574 75h1v1h-1zM577 75h1v1h-1zM580 75h1v1h-1zM582 75h1v1h-1zM586 75h1v1h-1zM590 75h1v1h-1zM594 75h1v1h-1zM597 75h9v1h-9zM609 75h9v1h-9zM622 75h1v1h-1zM628 75h1v1h-1zM633 75h1v1h-1zM640 75h1v1h-1zM649 75h1v1h-1zM657 75h8v1h-8zM670 75h9v1h-9zM464 76h1v1h-1zM467 76h1v1h-1zM472 76h1v1h-1zM480 76h1v1h-1zM483 76h1v1h-1zM489 76h1v1h-1zM491 76h1v1h-1zM493 76h5v1h-5zM503 76h7v1h-7zM513 76h3v1h-3zM517 76h1v1h-1zM520 76h3v1h-3zM529 76h1v1h-1zM538 76h7v1h-7zM553 76h1v1h-1zM562 76h1v1h-1zM566 76h1v1h-1zM574 76h1v1h-1zM577 76h1v1h-1zM580 76h1v1h-1zM582 76h1v1h-1zM586 76h1v1h-1zM590 76h1v1h-1zM594 76h1v1h-1zM598 76h1v1h-1zM601 76h1v1h-1zM609 76h1v1h-1zM617 76h1v1h-1zM622 76h1v1h-1zM628 76h1v1h-1zM633 76h1v1h-1zM636 76h1v1h-1zM640 76h1v1h-1zM648 76h3v1h-3zM657 76h1v1h-1zM670 76h1v1h-1zM673 76h1v1h-1zM676 76h1v1h-1zM464 77h1v1h-1zM466 77h1v1h-1zM468 77h1v1h-1zM472 77h1v1h-1zM479 77h1v1h-1zM483 77h1v1h-1zM491 77h1v1h-1zM495 77h1v1h-1zM503 77h1v1h-1zM509 77h1v1h-1zM513 77h1v1h-1zM518 77h1v1h-1zM522 77h1v1h-1zM529 77h1v1h-1zM538 77h1v1h-1zM544 77h1v1h-1zM552 77h1v1h-1zM555 77h1v1h-1zM560 77h11v1h-11zM574 77h3v1h-3zM580 77h1v1h-1zM582 77h1v1h-1zM586 77h1v1h-1zM589 77h1v1h-1zM594 77h1v1h-1zM599 77h1v1h-1zM601 77h1v1h-1zM609 77h1v1h-1zM611 77h5v1h-5zM617 77h1v1h-1zM622 77h7v1h-7zM633 77h1v1h-1zM635 77h1v1h-1zM640 77h1v1h-1zM647 77h1v1h-1zM649 77h1v1h-1zM651 77h1v1h-1zM657 77h1v1h-1zM666 77h1v1h-1zM670 77h1v1h-1zM673 77h1v1h-1zM676 77h1v1h-1zM464 78h2v1h-2zM468 78h1v1h-1zM471 78h1v1h-1zM473 78h1v1h-1zM479 78h1v1h-1zM483 78h1v1h-1zM486 78h1v1h-1zM491 78h1v1h-1zM495 78h1v1h-1zM503 78h1v1h-1zM509 78h1v1h-1zM513 78h1v1h-1zM517 78h1v1h-1zM522 78h1v1h-1zM529 78h1v1h-1zM538 78h1v1h-1zM544 78h1v1h-1zM551 78h1v1h-1zM556 78h1v1h-1zM566 78h1v1h-1zM574 78h1v1h-1zM578 78h1v1h-1zM582 78h1v1h-1zM585 78h1v1h-1zM589 78h1v1h-1zM594 78h1v1h-1zM600 78h1v1h-1zM609 78h1v1h-1zM611 78h1v1h-1zM615 78h1v1h-1zM617 78h1v1h-1zM633 78h2v1h-2zM639 78h1v1h-1zM641 78h1v1h-1zM646 78h1v1h-1zM649 78h1v1h-1zM652 78h1v1h-1zM657 78h1v1h-1zM666 78h1v1h-1zM670 78h1v1h-1zM672 78h1v1h-1zM676 78h1v1h-1zM464 79h1v1h-1zM470 79h1v1h-1zM473 79h1v1h-1zM478 79h1v1h-1zM483 79h1v1h-1zM486 79h1v1h-1zM491 79h1v1h-1zM495 79h1v1h-1zM502 79h1v1h-1zM507 79h1v1h-1zM509 79h1v1h-1zM513 79h1v1h-1zM518 79h1v1h-1zM522 79h1v1h-1zM529 79h1v1h-1zM538 79h7v1h-7zM549 79h9v1h-9zM566 79h1v1h-1zM574 79h1v1h-1zM578 79h1v1h-1zM582 79h1v1h-1zM585 79h1v1h-1zM588 79h1v1h-1zM594 79h1v1h-1zM599 79h1v1h-1zM601 79h2v1h-2zM609 79h1v1h-1zM611 79h5v1h-5zM617 79h1v1h-1zM621 79h1v1h-1zM623 79h1v1h-1zM626 79h1v1h-1zM629 79h1v1h-1zM633 79h1v1h-1zM638 79h1v1h-1zM642 79h1v1h-1zM644 79h2v1h-2zM649 79h1v1h-1zM653 79h2v1h-2zM657 79h1v1h-1zM666 79h1v1h-1zM669 79h1v1h-1zM671 79h1v1h-1zM676 79h1v1h-1zM464 80h6v1h-6zM474 80h1v1h-1zM477 80h1v1h-1zM484 80h3v1h-3zM491 80h8v1h-8zM501 80h1v1h-1zM508 80h1v1h-1zM513 80h10v1h-10zM524 80h11v1h-11zM538 80h1v1h-1zM544 80h1v1h-1zM550 80h1v1h-1zM557 80h1v1h-1zM566 80h1v1h-1zM575 80h4v1h-4zM581 80h2v1h-2zM584 80h1v1h-1zM587 80h1v1h-1zM592 80h2v1h-2zM596 80h3v1h-3zM603 80h4v1h-4zM609 80h1v1h-1zM616 80h2v1h-2zM620 80h1v1h-1zM624 80h1v1h-1zM627 80h1v1h-1zM630 80h1v1h-1zM636 80h2v1h-2zM642 80h1v1h-1zM649 80h1v1h-1zM658 80h9v1h-9zM668 80h1v1h-1zM672 80h7v1h-7zM467 85h2v1h-2zM477 85h1v1h-1zM482 85h1v1h-1zM505 85h1v1h-1zM515 85h7v1h-7zM539 85h1v1h-1zM542 85h5v1h-5zM556 85h1v1h-1zM561 85h9v1h-9zM573 85h1v1h-1zM576 85h7v1h-7zM587 85h1v1h-1zM591 85h1v1h-1zM604 85h1v1h-1zM610 85h1v1h-1zM613 85h6v1h-6zM633 85h1v1h-1zM636 85h7v1h-7zM647 85h1v1h-1zM651 85h1v1h-1zM469 86h1v1h-1zM477 86h4v1h-4zM482 86h5v1h-5zM489 86h9v1h-9zM505 86h1v1h-1zM515 86h1v1h-1zM521 86h1v1h-1zM539 86h1v1h-1zM542 86h1v1h-1zM546 86h1v1h-1zM548 86h4v1h-4zM556 86h1v1h-1zM565 86h1v1h-1zM574 86h1v1h-1zM576 86h1v1h-1zM579 86h1v1h-1zM582 86h1v1h-1zM584 86h11v1h-11zM596 86h4v1h-4zM604 86h1v1h-1zM611 86h1v1h-1zM618 86h1v1h-1zM634 86h1v1h-1zM636 86h1v1h-1zM639 86h1v1h-1zM642 86h1v1h-1zM644 86h11v1h-11zM469 87h1v1h-1zM477 87h1v1h-1zM479 87h1v1h-1zM481 87h1v1h-1zM484 87h1v1h-1zM493 87h1v1h-1zM504 87h1v1h-1zM506 87h1v1h-1zM515 87h1v1h-1zM521 87h1v1h-1zM537 87h6v1h-6zM546 87h1v1h-1zM551 87h8v1h-8zM565 87h1v1h-1zM576 87h1v1h-1zM578 87h3v1h-3zM582 87h1v1h-1zM585 87h1v1h-1zM587 87h1v1h-1zM589 87h1v1h-1zM591 87h1v1h-1zM593 87h1v1h-1zM596 87h1v1h-1zM599 87h8v1h-8zM609 87h1v1h-1zM618 87h1v1h-1zM636 87h1v1h-1zM638 87h3v1h-3zM642 87h1v1h-1zM645 87h1v1h-1zM647 87h1v1h-1zM649 87h1v1h-1zM651 87h1v1h-1zM653 87h1v1h-1zM469 88h1v1h-1zM476 88h1v1h-1zM478 88h8v1h-8zM493 88h1v1h-1zM503 88h1v1h-1zM507 88h1v1h-1zM515 88h7v1h-7zM539 88h1v1h-1zM542 88h5v1h-5zM548 88h1v1h-1zM551 88h1v1h-1zM556 88h1v1h-1zM565 88h1v1h-1zM572 88h3v1h-3zM576 88h1v1h-1zM579 88h1v1h-1zM582 88h1v1h-1zM585 88h5v1h-5zM592 88h1v1h-1zM596 88h1v1h-1zM599 88h1v1h-1zM604 88h1v1h-1zM609 88h1v1h-1zM612 88h4v1h-4zM618 88h1v1h-1zM632 88h3v1h-3zM636 88h1v1h-1zM639 88h1v1h-1zM642 88h1v1h-1zM645 88h5v1h-5zM652 88h1v1h-1zM468 89h1v1h-1zM470 89h1v1h-1zM481 89h1v1h-1zM485 89h1v1h-1zM493 89h1v1h-1zM502 89h1v1h-1zM505 89h1v1h-1zM508 89h1v1h-1zM515 89h1v1h-1zM521 89h1v1h-1zM539 89h1v1h-1zM542 89h1v1h-1zM546 89h1v1h-1zM549 89h1v1h-1zM551 89h1v1h-1zM556 89h1v1h-1zM560 89h11v1h-11zM574 89h1v1h-1zM576 89h7v1h-7zM586 89h3v1h-3zM591 89h1v1h-1zM593 89h1v1h-1zM596 89h1v1h-1zM599 89h1v1h-1zM601 89h1v1h-1zM604 89h1v1h-1zM609 89h1v1h-1zM612 89h1v1h-1zM615 89h1v1h-1zM618 89h1v1h-1zM634 89h1v1h-1zM636 89h7v1h-7zM646 89h3v1h-3zM651 89h1v1h-1zM653 89h1v1h-1zM468 90h1v1h-1zM470 90h1v1h-1zM477 90h9v1h-9zM490 90h7v1h-7zM501 90h1v1h-1zM505 90h1v1h-1zM509 90h2v1h-2zM515 90h1v1h-1zM521 90h1v1h-1zM538 90h3v1h-3zM542 90h1v1h-1zM546 90h1v1h-1zM550 90h1v1h-1zM553 90h1v1h-1zM556 90h1v1h-1zM565 90h1v1h-1zM574 90h1v1h-1zM576 90h1v1h-1zM582 90h1v1h-1zM585 90h1v1h-1zM587 90h1v1h-1zM589 90h2v1h-2zM594 90h1v1h-1zM596 90h4v1h-4zM602 90h1v1h-1zM604 90h1v1h-1zM609 90h1v1h-1zM612 90h4v1h-4zM618 90h1v1h-1zM634 90h1v1h-1zM636 90h1v1h-1zM642 90h1v1h-1zM645 90h1v1h-1zM647 90h1v1h-1zM649 90h2v1h-2zM654 90h1v1h-1zM467 91h1v1h-1zM471 91h1v1h-1zM477 91h1v1h-1zM481 91h1v1h-1zM492 91h1v1h-1zM496 91h1v1h-1zM505 91h1v1h-1zM515 91h7v1h-7zM527 91h2v1h-2zM537 91h1v1h-1zM539 91h1v1h-1zM541 91h6v1h-6zM550 91h1v1h-1zM554 91h1v1h-1zM556 91h1v1h-1zM565 91h1v1h-1zM574 91h1v1h-1zM576 91h1v1h-1zM578 91h3v1h-3zM582 91h1v1h-1zM585 91h9v1h-9zM596 91h1v1h-1zM599 91h1v1h-1zM602 91h1v1h-1zM604 91h1v1h-1zM609 91h1v1h-1zM612 91h1v1h-1zM615 91h1v1h-1zM618 91h1v1h-1zM623 91h2v1h-2zM634 91h1v1h-1zM636 91h1v1h-1zM638 91h3v1h-3zM642 91h1v1h-1zM645 91h9v1h-9zM467 92h1v1h-1zM471 92h1v1h-1zM477 92h10v1h-10zM492 92h1v1h-1zM496 92h1v1h-1zM505 92h1v1h-1zM515 92h1v1h-1zM521 92h1v1h-1zM527 92h2v1h-2zM536 92h1v1h-1zM539 92h1v1h-1zM542 92h1v1h-1zM546 92h1v1h-1zM549 92h1v1h-1zM551 92h1v1h-1zM556 92h1v1h-1zM565 92h1v1h-1zM574 92h1v1h-1zM576 92h1v1h-1zM578 92h1v1h-1zM580 92h1v1h-1zM582 92h1v1h-1zM589 92h1v1h-1zM596 92h1v1h-1zM599 92h1v1h-1zM604 92h1v1h-1zM609 92h1v1h-1zM612 92h1v1h-1zM615 92h1v1h-1zM618 92h1v1h-1zM623 92h2v1h-2zM634 92h1v1h-1zM636 92h1v1h-1zM638 92h1v1h-1zM640 92h1v1h-1zM642 92h1v1h-1zM649 92h1v1h-1zM466 93h1v1h-1zM472 93h1v1h-1zM479 93h1v1h-1zM481 93h1v1h-1zM486 93h1v1h-1zM492 93h1v1h-1zM496 93h1v1h-1zM505 93h1v1h-1zM515 93h1v1h-1zM521 93h1v1h-1zM528 93h1v1h-1zM539 93h1v1h-1zM542 93h1v1h-1zM546 93h1v1h-1zM549 93h1v1h-1zM551 93h1v1h-1zM556 93h1v1h-1zM565 93h1v1h-1zM574 93h3v1h-3zM578 93h3v1h-3zM582 93h1v1h-1zM586 93h1v1h-1zM589 93h4v1h-4zM596 93h1v1h-1zM599 93h1v1h-1zM604 93h1v1h-1zM609 93h1v1h-1zM612 93h4v1h-4zM618 93h1v1h-1zM624 93h1v1h-1zM634 93h3v1h-3zM638 93h3v1h-3zM642 93h1v1h-1zM646 93h1v1h-1zM649 93h4v1h-4zM465 94h1v1h-1zM473 94h1v1h-1zM478 94h1v1h-1zM481 94h1v1h-1zM484 94h2v1h-2zM492 94h1v1h-1zM496 94h1v1h-1zM505 94h1v1h-1zM514 94h1v1h-1zM519 94h1v1h-1zM521 94h1v1h-1zM527 94h1v1h-1zM539 94h1v1h-1zM542 94h5v1h-5zM548 94h1v1h-1zM554 94h1v1h-1zM556 94h1v1h-1zM565 94h1v1h-1zM574 94h1v1h-1zM576 94h1v1h-1zM582 94h1v1h-1zM586 94h1v1h-1zM589 94h1v1h-1zM596 94h4v1h-4zM604 94h1v1h-1zM609 94h1v1h-1zM618 94h1v1h-1zM623 94h1v1h-1zM634 94h1v1h-1zM636 94h1v1h-1zM642 94h1v1h-1zM646 94h1v1h-1zM649 94h1v1h-1zM464 95h1v1h-1zM474 95h1v1h-1zM476 95h2v1h-2zM481 95h1v1h-1zM488 95h11v1h-11zM505 95h1v1h-1zM513 95h1v1h-1zM520 95h1v1h-1zM539 95h1v1h-1zM542 95h1v1h-1zM546 95h1v1h-1zM555 95h1v1h-1zM563 95h3v1h-3zM575 95h1v1h-1zM580 95h3v1h-3zM584 95h11v1h-11zM602 95h3v1h-3zM609 95h1v1h-1zM616 95h3v1h-3zM635 95h1v1h-1zM640 95h3v1h-3zM644 95h11v1h-11zM466 100h1v1h-1zM469 100h6v1h-6zM481 100h1v1h-1zM490 100h7v1h-7zM502 100h1v1h-1zM505 100h5v1h-5zM513 100h1v1h-1zM520 100h1v1h-1zM529 100h1v1h-1zM540 100h1v1h-1zM549 100h1v1h-1zM553 100h1v1h-1zM555 100h1v1h-1zM564 100h1v1h-1zM466 101h1v1h-1zM477 101h10v1h-10zM490 101h1v1h-1zM496 101h1v1h-1zM502 101h1v1h-1zM505 101h1v1h-1zM509 101h1v1h-1zM514 101h1v1h-1zM520 101h1v1h-1zM529 101h1v1h-1zM541 101h1v1h-1zM549 101h1v1h-1zM552 101h7v1h-7zM563 101h3v1h-3zM464 102h5v1h-5zM470 102h4v1h-4zM477 102h1v1h-1zM480 102h1v1h-1zM483 102h1v1h-1zM490 102h7v1h-7zM501 102h1v1h-1zM505 102h5v1h-5zM514 102h1v1h-1zM516 102h7v1h-7zM529 102h1v1h-1zM537 102h9v1h-9zM548 102h4v1h-4zM553 102h1v1h-1zM555 102h1v1h-1zM563 102h3v1h-3zM464 103h1v1h-1zM466 103h1v1h-1zM468 103h1v1h-1zM470 103h1v1h-1zM473 103h1v1h-1zM477 103h9v1h-9zM490 103h1v1h-1zM496 103h1v1h-1zM500 103h1v1h-1zM503 103h1v1h-1zM505 103h1v1h-1zM509 103h1v1h-1zM520 103h1v1h-1zM526 103h1v1h-1zM529 103h1v1h-1zM532 103h1v1h-1zM544 103h1v1h-1zM548 103h1v1h-1zM550 103h1v1h-1zM552 103h6v1h-6zM563 103h3v1h-3zM464 104h1v1h-1zM466 104h1v1h-1zM468 104h1v1h-1zM470 104h4v1h-4zM477 104h1v1h-1zM480 104h1v1h-1zM483 104h1v1h-1zM490 104h7v1h-7zM502 104h1v1h-1zM505 104h5v1h-5zM512 104h3v1h-3zM517 104h1v1h-1zM520 104h1v1h-1zM526 104h1v1h-1zM529 104h1v1h-1zM533 104h1v1h-1zM543 104h1v1h-1zM548 104h1v1h-1zM550 104h1v1h-1zM553 104h1v1h-1zM555 104h1v1h-1zM557 104h1v1h-1zM563 104h3v1h-3zM464 105h1v1h-1zM466 105h1v1h-1zM468 105h1v1h-1zM477 105h1v1h-1zM480 105h4v1h-4zM492 105h1v1h-1zM494 105h1v1h-1zM501 105h2v1h-2zM514 105h1v1h-1zM518 105h1v1h-1zM520 105h1v1h-1zM525 105h1v1h-1zM529 105h1v1h-1zM533 105h1v1h-1zM542 105h1v1h-1zM548 105h1v1h-1zM550 105h9v1h-9zM564 105h1v1h-1zM464 106h1v1h-1zM466 106h1v1h-1zM468 106h7v1h-7zM477 106h1v1h-1zM489 106h1v1h-1zM492 106h1v1h-1zM494 106h1v1h-1zM497 106h1v1h-1zM500 106h1v1h-1zM502 106h1v1h-1zM505 106h6v1h-6zM514 106h1v1h-1zM520 106h1v1h-1zM525 106h1v1h-1zM529 106h1v1h-1zM534 106h1v1h-1zM541 106h1v1h-1zM548 106h1v1h-1zM550 106h1v1h-1zM553 106h1v1h-1zM555 106h1v1h-1zM557 106h1v1h-1zM564 106h1v1h-1zM464 107h1v1h-1zM466 107h4v1h-4zM471 107h1v1h-1zM474 107h1v1h-1zM477 107h1v1h-1zM479 107h6v1h-6zM490 107h1v1h-1zM492 107h1v1h-1zM494 107h1v1h-1zM497 107h1v1h-1zM502 107h1v1h-1zM508 107h1v1h-1zM514 107h1v1h-1zM520 107h1v1h-1zM524 107h1v1h-1zM529 107h1v1h-1zM534 107h1v1h-1zM540 107h1v1h-1zM549 107h1v1h-1zM552 107h6v1h-6zM564 107h1v1h-1zM466 108h1v1h-1zM469 108h6v1h-6zM477 108h1v1h-1zM480 108h1v1h-1zM483 108h1v1h-1zM490 108h1v1h-1zM492 108h1v1h-1zM494 108h1v1h-1zM496 108h1v1h-1zM502 108h1v1h-1zM504 108h7v1h-7zM514 108h1v1h-1zM519 108h2v1h-2zM529 108h1v1h-1zM538 108h2v1h-2zM550 108h2v1h-2zM553 108h1v1h-1zM555 108h1v1h-1zM466 109h1v1h-1zM469 109h1v1h-1zM471 109h1v1h-1zM474 109h1v1h-1zM476 109h1v1h-1zM481 109h2v1h-2zM492 109h1v1h-1zM494 109h1v1h-1zM502 109h1v1h-1zM505 109h1v1h-1zM508 109h1v1h-1zM513 109h1v1h-1zM515 109h1v1h-1zM527 109h1v1h-1zM529 109h1v1h-1zM537 109h1v1h-1zM540 109h1v1h-1zM549 109h1v1h-1zM552 109h2v1h-2zM555 109h1v1h-1zM557 109h1v1h-1zM564 109h1v1h-1zM466 110h1v1h-1zM469 110h6v1h-6zM476 110h1v1h-1zM478 110h3v1h-3zM483 110h3v1h-3zM488 110h11v1h-11zM502 110h1v1h-1zM507 110h2v1h-2zM512 110h1v1h-1zM516 110h7v1h-7zM528 110h1v1h-1zM536 110h1v1h-1zM541 110h6v1h-6zM548 110h1v1h-1zM551 110h1v1h-1zM553 110h1v1h-1zM555 110h1v1h-1zM558 110h1v1h-1zM564 110h1v1h-1zM469 115h1v1h-1zM479 115h7v1h-7zM489 115h1v1h-1zM492 115h7v1h-7zM503 115h1v1h-1zM507 115h1v1h-1zM513 115h1v1h-1zM517 115h1v1h-1zM521 115h1v1h-1zM529 115h1v1h-1zM538 115h1v1h-1zM543 115h1v1h-1zM553 115h1v1h-1zM574 115h1v1h-1zM579 115h1v1h-1zM584 115h11v1h-11zM599 115h1v1h-1zM602 115h1v1h-1zM613 115h1v1h-1zM648 115h1v1h-1zM652 115h1v1h-1zM660 115h1v1h-1zM664 115h1v1h-1zM666 115h1v1h-1zM674 115h1v1h-1zM469 116h1v1h-1zM479 116h1v1h-1zM485 116h1v1h-1zM490 116h1v1h-1zM492 116h1v1h-1zM495 116h1v1h-1zM498 116h1v1h-1zM500 116h11v1h-11zM514 116h1v1h-1zM517 116h1v1h-1zM520 116h1v1h-1zM529 116h1v1h-1zM538 116h1v1h-1zM543 116h1v1h-1zM548 116h11v1h-11zM573 116h1v1h-1zM576 116h1v1h-1zM579 116h1v1h-1zM581 116h1v1h-1zM589 116h1v1h-1zM599 116h1v1h-1zM602 116h1v1h-1zM613 116h1v1h-1zM636 116h7v1h-7zM648 116h1v1h-1zM652 116h1v1h-1zM660 116h1v1h-1zM664 116h1v1h-1zM667 116h1v1h-1zM675 116h1v1h-1zM464 117h11v1h-11zM479 117h1v1h-1zM485 117h1v1h-1zM492 117h1v1h-1zM494 117h3v1h-3zM498 117h1v1h-1zM501 117h1v1h-1zM503 117h1v1h-1zM505 117h1v1h-1zM507 117h1v1h-1zM509 117h1v1h-1zM515 117h1v1h-1zM517 117h1v1h-1zM519 117h1v1h-1zM525 117h9v1h-9zM537 117h1v1h-1zM540 117h7v1h-7zM553 117h1v1h-1zM572 117h6v1h-6zM579 117h2v1h-2zM588 117h2v1h-2zM591 117h2v1h-2zM596 117h1v1h-1zM599 117h1v1h-1zM602 117h5v1h-5zM609 117h10v1h-10zM620 117h3v1h-3zM627 117h4v1h-4zM636 117h1v1h-1zM642 117h1v1h-1zM648 117h1v1h-1zM651 117h6v1h-6zM659 117h1v1h-1zM664 117h4v1h-4zM671 117h9v1h-9zM468 118h3v1h-3zM479 118h7v1h-7zM488 118h3v1h-3zM492 118h1v1h-1zM495 118h1v1h-1zM498 118h1v1h-1zM501 118h5v1h-5zM508 118h1v1h-1zM512 118h11v1h-11zM529 118h1v1h-1zM537 118h1v1h-1zM539 118h1v1h-1zM543 118h1v1h-1zM550 118h7v1h-7zM579 118h1v1h-1zM582 118h1v1h-1zM586 118h2v1h-2zM589 118h1v1h-1zM593 118h1v1h-1zM596 118h1v1h-1zM599 118h1v1h-1zM601 118h1v1h-1zM605 118h1v1h-1zM612 118h1v1h-1zM622 118h1v1h-1zM631 118h1v1h-1zM636 118h1v1h-1zM642 118h1v1h-1zM646 118h4v1h-4zM656 118h1v1h-1zM659 118h1v1h-1zM662 118h3v1h-3zM678 118h1v1h-1zM467 119h1v1h-1zM469 119h1v1h-1zM471 119h1v1h-1zM479 119h1v1h-1zM485 119h1v1h-1zM490 119h1v1h-1zM492 119h7v1h-7zM502 119h3v1h-3zM507 119h1v1h-1zM509 119h1v1h-1zM512 119h1v1h-1zM522 119h1v1h-1zM524 119h11v1h-11zM536 119h3v1h-3zM541 119h5v1h-5zM550 119h1v1h-1zM553 119h1v1h-1zM556 119h1v1h-1zM573 119h5v1h-5zM579 119h4v1h-4zM584 119h2v1h-2zM589 119h1v1h-1zM594 119h1v1h-1zM596 119h1v1h-1zM599 119h2v1h-2zM602 119h1v1h-1zM605 119h1v1h-1zM611 119h1v1h-1zM615 119h1v1h-1zM622 119h1v1h-1zM631 119h1v1h-1zM636 119h1v1h-1zM642 119h1v1h-1zM648 119h1v1h-1zM651 119h1v1h-1zM656 119h1v1h-1zM658 119h3v1h-3zM664 119h5v1h-5zM677 119h1v1h-1zM467 120h1v1h-1zM469 120h1v1h-1zM471 120h1v1h-1zM479 120h1v1h-1zM485 120h1v1h-1zM490 120h1v1h-1zM492 120h1v1h-1zM498 120h1v1h-1zM501 120h1v1h-1zM503 120h1v1h-1zM505 120h2v1h-2zM510 120h1v1h-1zM512 120h1v1h-1zM515 120h5v1h-5zM522 120h1v1h-1zM529 120h1v1h-1zM538 120h1v1h-1zM550 120h1v1h-1zM553 120h1v1h-1zM556 120h1v1h-1zM573 120h1v1h-1zM577 120h1v1h-1zM589 120h1v1h-1zM596 120h1v1h-1zM599 120h1v1h-1zM602 120h1v1h-1zM605 120h1v1h-1zM610 120h2v1h-2zM615 120h1v1h-1zM622 120h1v1h-1zM628 120h3v1h-3zM636 120h7v1h-7zM648 120h1v1h-1zM652 120h1v1h-1zM656 120h1v1h-1zM660 120h1v1h-1zM662 120h3v1h-3zM676 120h1v1h-1zM466 121h1v1h-1zM469 121h1v1h-1zM472 121h1v1h-1zM479 121h7v1h-7zM490 121h1v1h-1zM492 121h1v1h-1zM494 121h3v1h-3zM498 121h1v1h-1zM501 121h9v1h-9zM512 121h1v1h-1zM515 121h1v1h-1zM519 121h1v1h-1zM522 121h1v1h-1zM528 121h3v1h-3zM537 121h1v1h-1zM541 121h5v1h-5zM550 121h7v1h-7zM563 121h2v1h-2zM573 121h5v1h-5zM579 121h1v1h-1zM581 121h1v1h-1zM586 121h8v1h-8zM596 121h1v1h-1zM598 121h2v1h-2zM602 121h1v1h-1zM604 121h1v1h-1zM609 121h1v1h-1zM611 121h1v1h-1zM613 121h5v1h-5zM622 121h1v1h-1zM631 121h1v1h-1zM636 121h1v1h-1zM642 121h1v1h-1zM648 121h1v1h-1zM650 121h1v1h-1zM654 121h1v1h-1zM656 121h1v1h-1zM659 121h1v1h-1zM664 121h1v1h-1zM667 121h1v1h-1zM675 121h1v1h-1zM465 122h1v1h-1zM469 122h1v1h-1zM473 122h1v1h-1zM479 122h1v1h-1zM485 122h1v1h-1zM490 122h1v1h-1zM492 122h1v1h-1zM494 122h1v1h-1zM496 122h1v1h-1zM498 122h1v1h-1zM505 122h1v1h-1zM512 122h1v1h-1zM515 122h1v1h-1zM519 122h1v1h-1zM522 122h1v1h-1zM527 122h1v1h-1zM529 122h1v1h-1zM531 122h1v1h-1zM536 122h4v1h-4zM541 122h1v1h-1zM545 122h1v1h-1zM552 122h3v1h-3zM563 122h2v1h-2zM573 122h1v1h-1zM577 122h1v1h-1zM579 122h2v1h-2zM586 122h1v1h-1zM593 122h1v1h-1zM596 122h2v1h-2zM599 122h1v1h-1zM603 122h1v1h-1zM611 122h1v1h-1zM615 122h1v1h-1zM622 122h1v1h-1zM631 122h1v1h-1zM636 122h1v1h-1zM642 122h1v1h-1zM648 122h2v1h-2zM653 122h1v1h-1zM656 122h1v1h-1zM658 122h4v1h-4zM664 122h1v1h-1zM666 122h1v1h-1zM674 122h1v1h-1zM464 123h1v1h-1zM467 123h5v1h-5zM474 123h1v1h-1zM479 123h1v1h-1zM485 123h1v1h-1zM490 123h3v1h-3zM494 123h3v1h-3zM498 123h1v1h-1zM502 123h1v1h-1zM505 123h4v1h-4zM512 123h1v1h-1zM515 123h5v1h-5zM522 123h1v1h-1zM526 123h1v1h-1zM529 123h1v1h-1zM532 123h1v1h-1zM540 123h2v1h-2zM545 123h1v1h-1zM551 123h1v1h-1zM553 123h1v1h-1zM555 123h1v1h-1zM564 123h1v1h-1zM573 123h5v1h-5zM579 123h1v1h-1zM582 123h1v1h-1zM586 123h1v1h-1zM593 123h1v1h-1zM596 123h1v1h-1zM599 123h1v1h-1zM603 123h2v1h-2zM611 123h1v1h-1zM615 123h1v1h-1zM622 123h1v1h-1zM631 123h1v1h-1zM636 123h1v1h-1zM642 123h1v1h-1zM646 123h2v1h-2zM651 123h2v1h-2zM656 123h1v1h-1zM662 123h1v1h-1zM665 123h1v1h-1zM668 123h1v1h-1zM672 123h2v1h-2zM469 124h1v1h-1zM478 124h1v1h-1zM483 124h1v1h-1zM485 124h1v1h-1zM490 124h1v1h-1zM492 124h1v1h-1zM498 124h1v1h-1zM502 124h1v1h-1zM505 124h1v1h-1zM512 124h1v1h-1zM522 124h1v1h-1zM524 124h2v1h-2zM529 124h1v1h-1zM533 124h2v1h-2zM538 124h2v1h-2zM541 124h5v1h-5zM550 124h1v1h-1zM553 124h1v1h-1zM556 124h1v1h-1zM563 124h1v1h-1zM573 124h1v1h-1zM577 124h1v1h-1zM579 124h1v1h-1zM582 124h1v1h-1zM586 124h8v1h-8zM599 124h1v1h-1zM602 124h1v1h-1zM605 124h1v1h-1zM611 124h1v1h-1zM615 124h1v1h-1zM620 124h5v1h-5zM627 124h4v1h-4zM636 124h7v1h-7zM656 124h1v1h-1zM660 124h2v1h-2zM664 124h1v1h-1zM666 124h1v1h-1zM668 124h1v1h-1zM671 124h1v1h-1zM674 124h1v1h-1zM469 125h1v1h-1zM477 125h1v1h-1zM484 125h1v1h-1zM491 125h1v1h-1zM496 125h3v1h-3zM500 125h11v1h-11zM512 125h1v1h-1zM520 125h3v1h-3zM529 125h1v1h-1zM536 125h2v1h-2zM541 125h1v1h-1zM545 125h1v1h-1zM548 125h2v1h-2zM553 125h1v1h-1zM557 125h2v1h-2zM573 125h1v1h-1zM576 125h2v1h-2zM579 125h4v1h-4zM586 125h1v1h-1zM593 125h1v1h-1zM599 125h1v1h-1zM601 125h1v1h-1zM606 125h1v1h-1zM611 125h8v1h-8zM636 125h1v1h-1zM642 125h1v1h-1zM654 125h2v1h-2zM658 125h2v1h-2zM662 125h2v1h-2zM667 125h2v1h-2zM670 125h1v1h-1zM675 125h6v1h-6zM477 130h1v1h-1zM481 130h1v1h-1zM485 130h1v1h-1zM493 130h1v1h-1zM506 130h1v1h-1zM517 130h1v1h-1zM539 130h1v1h-1zM543 130h1v1h-1zM464 131h11v1h-11zM478 131h1v1h-1zM481 131h1v1h-1zM484 131h1v1h-1zM493 131h1v1h-1zM500 131h4v1h-4zM506 131h4v1h-4zM513 131h10v1h-10zM539 131h1v1h-1zM543 131h1v1h-1zM469 132h1v1h-1zM479 132h1v1h-1zM481 132h1v1h-1zM483 132h1v1h-1zM489 132h9v1h-9zM502 132h1v1h-1zM505 132h1v1h-1zM508 132h1v1h-1zM513 132h1v1h-1zM522 132h1v1h-1zM539 132h1v1h-1zM543 132h1v1h-1zM546 132h1v1h-1zM469 133h1v1h-1zM476 133h11v1h-11zM493 133h1v1h-1zM501 133h1v1h-1zM504 133h7v1h-7zM512 133h1v1h-1zM521 133h1v1h-1zM537 133h1v1h-1zM539 133h1v1h-1zM543 133h1v1h-1zM545 133h1v1h-1zM469 134h2v1h-2zM476 134h1v1h-1zM486 134h1v1h-1zM488 134h11v1h-11zM500 134h4v1h-4zM505 134h1v1h-1zM507 134h1v1h-1zM510 134h1v1h-1zM514 134h8v1h-8zM537 134h1v1h-1zM539 134h3v1h-3zM543 134h2v1h-2zM469 135h1v1h-1zM471 135h1v1h-1zM476 135h1v1h-1zM479 135h5v1h-5zM486 135h1v1h-1zM493 135h1v1h-1zM501 135h1v1h-1zM503 135h1v1h-1zM505 135h6v1h-6zM517 135h1v1h-1zM537 135h1v1h-1zM539 135h1v1h-1zM543 135h1v1h-1zM469 136h1v1h-1zM472 136h1v1h-1zM476 136h1v1h-1zM479 136h1v1h-1zM483 136h1v1h-1zM486 136h1v1h-1zM492 136h3v1h-3zM501 136h1v1h-1zM503 136h1v1h-1zM505 136h1v1h-1zM507 136h1v1h-1zM510 136h1v1h-1zM514 136h1v1h-1zM517 136h1v1h-1zM527 136h2v1h-2zM537 136h1v1h-1zM539 136h1v1h-1zM543 136h1v1h-1zM469 137h1v1h-1zM472 137h1v1h-1zM476 137h1v1h-1zM479 137h1v1h-1zM483 137h1v1h-1zM486 137h1v1h-1zM491 137h1v1h-1zM493 137h1v1h-1zM495 137h1v1h-1zM501 137h1v1h-1zM503 137h1v1h-1zM505 137h6v1h-6zM514 137h1v1h-1zM517 137h4v1h-4zM527 137h2v1h-2zM537 137h1v1h-1zM539 137h1v1h-1zM543 137h1v1h-1zM469 138h1v1h-1zM476 138h1v1h-1zM479 138h5v1h-5zM486 138h1v1h-1zM490 138h1v1h-1zM493 138h1v1h-1zM496 138h1v1h-1zM501 138h3v1h-3zM505 138h1v1h-1zM507 138h1v1h-1zM510 138h1v1h-1zM514 138h1v1h-1zM517 138h1v1h-1zM528 138h1v1h-1zM537 138h1v1h-1zM539 138h1v1h-1zM543 138h1v1h-1zM546 138h1v1h-1zM469 139h1v1h-1zM476 139h1v1h-1zM486 139h1v1h-1zM488 139h2v1h-2zM493 139h1v1h-1zM497 139h2v1h-2zM501 139h1v1h-1zM505 139h1v1h-1zM507 139h1v1h-1zM510 139h1v1h-1zM513 139h1v1h-1zM515 139h1v1h-1zM517 139h1v1h-1zM527 139h1v1h-1zM537 139h1v1h-1zM539 139h3v1h-3zM543 139h1v1h-1zM546 139h1v1h-1zM469 140h1v1h-1zM476 140h1v1h-1zM484 140h3v1h-3zM493 140h1v1h-1zM504 140h1v1h-1zM509 140h2v1h-2zM512 140h1v1h-1zM516 140h7v1h-7zM536 140h3v1h-3zM544 140h3v1h-3zM466 145h1v1h-1zM470 145h1v1h-1zM472 145h1v1h-1zM479 145h1v1h-1zM483 145h1v1h-1zM491 145h1v1h-1zM496 145h1v1h-1zM501 145h1v1h-1zM504 145h1v1h-1zM507 145h4v1h-4zM517 145h1v1h-1zM526 145h1v1h-1zM531 145h1v1h-1zM539 145h1v1h-1zM541 145h5v1h-5zM554 145h5v1h-5zM562 145h7v1h-7zM576 145h1v1h-1zM466 146h1v1h-1zM470 146h1v1h-1zM473 146h1v1h-1zM478 146h1v1h-1zM483 146h1v1h-1zM491 146h1v1h-1zM495 146h1v1h-1zM500 146h6v1h-6zM507 146h1v1h-1zM510 146h1v1h-1zM517 146h1v1h-1zM526 146h1v1h-1zM529 146h5v1h-5zM538 146h1v1h-1zM541 146h1v1h-1zM545 146h1v1h-1zM548 146h4v1h-4zM554 146h1v1h-1zM558 146h1v1h-1zM562 146h1v1h-1zM568 146h1v1h-1zM575 146h3v1h-3zM465 147h1v1h-1zM470 147h4v1h-4zM477 147h4v1h-4zM482 147h5v1h-5zM491 147h1v1h-1zM494 147h1v1h-1zM501 147h1v1h-1zM504 147h1v1h-1zM507 147h1v1h-1zM510 147h1v1h-1zM512 147h11v1h-11zM524 147h5v1h-5zM531 147h1v1h-1zM537 147h1v1h-1zM541 147h5v1h-5zM548 147h1v1h-1zM551 147h1v1h-1zM554 147h1v1h-1zM558 147h1v1h-1zM562 147h7v1h-7zM575 147h3v1h-3zM465 148h1v1h-1zM468 148h3v1h-3zM477 148h1v1h-1zM480 148h2v1h-2zM486 148h1v1h-1zM491 148h1v1h-1zM493 148h1v1h-1zM501 148h4v1h-4zM507 148h4v1h-4zM517 148h1v1h-1zM526 148h1v1h-1zM531 148h1v1h-1zM536 148h1v1h-1zM539 148h1v1h-1zM541 148h1v1h-1zM545 148h1v1h-1zM548 148h1v1h-1zM551 148h1v1h-1zM554 148h5v1h-5zM562 148h1v1h-1zM568 148h1v1h-1zM575 148h3v1h-3zM464 149h3v1h-3zM470 149h5v1h-5zM477 149h1v1h-1zM480 149h1v1h-1zM486 149h1v1h-1zM491 149h2v1h-2zM501 149h1v1h-1zM504 149h1v1h-1zM507 149h1v1h-1zM510 149h1v1h-1zM514 149h7v1h-7zM526 149h1v1h-1zM528 149h7v1h-7zM538 149h1v1h-1zM541 149h5v1h-5zM548 149h4v1h-4zM554 149h1v1h-1zM558 149h1v1h-1zM562 149h7v1h-7zM575 149h3v1h-3zM466 150h1v1h-1zM468 150h3v1h-3zM477 150h4v1h-4zM482 150h1v1h-1zM486 150h1v1h-1zM489 150h10v1h-10zM501 150h4v1h-4zM507 150h1v1h-1zM510 150h1v1h-1zM515 150h1v1h-1zM519 150h1v1h-1zM526 150h2v1h-2zM532 150h1v1h-1zM537 150h2v1h-2zM541 150h1v1h-1zM543 150h1v1h-1zM546 150h1v1h-1zM548 150h1v1h-1zM551 150h1v1h-1zM554 150h1v1h-1zM558 150h1v1h-1zM564 150h1v1h-1zM566 150h1v1h-1zM576 150h1v1h-1zM465 151h1v1h-1zM470 151h1v1h-1zM473 151h1v1h-1zM477 151h1v1h-1zM480 151h1v1h-1zM483 151h1v1h-1zM486 151h1v1h-1zM491 151h1v1h-1zM493 151h1v1h-1zM501 151h1v1h-1zM504 151h1v1h-1zM507 151h4v1h-4zM515 151h1v1h-1zM519 151h1v1h-1zM525 151h2v1h-2zM528 151h7v1h-7zM536 151h1v1h-1zM538 151h1v1h-1zM541 151h1v1h-1zM543 151h1v1h-1zM545 151h1v1h-1zM548 151h1v1h-1zM551 151h1v1h-1zM554 151h5v1h-5zM561 151h1v1h-1zM564 151h1v1h-1zM566 151h1v1h-1zM569 151h1v1h-1zM576 151h1v1h-1zM464 152h4v1h-4zM470 152h1v1h-1zM472 152h1v1h-1zM477 152h1v1h-1zM480 152h1v1h-1zM483 152h1v1h-1zM486 152h1v1h-1zM491 152h1v1h-1zM494 152h1v1h-1zM500 152h6v1h-6zM507 152h1v1h-1zM510 152h1v1h-1zM516 152h1v1h-1zM518 152h1v1h-1zM524 152h1v1h-1zM526 152h1v1h-1zM529 152h1v1h-1zM532 152h1v1h-1zM538 152h1v1h-1zM541 152h1v1h-1zM544 152h1v1h-1zM548 152h4v1h-4zM554 152h1v1h-1zM558 152h1v1h-1zM562 152h1v1h-1zM564 152h1v1h-1zM566 152h1v1h-1zM569 152h1v1h-1zM576 152h1v1h-1zM468 153h1v1h-1zM471 153h1v1h-1zM474 153h1v1h-1zM477 153h1v1h-1zM480 153h1v1h-1zM486 153h1v1h-1zM491 153h1v1h-1zM495 153h1v1h-1zM507 153h1v1h-1zM510 153h1v1h-1zM517 153h1v1h-1zM526 153h1v1h-1zM530 153h1v1h-1zM532 153h1v1h-1zM538 153h1v1h-1zM541 153h1v1h-1zM544 153h1v1h-1zM553 153h1v1h-1zM558 153h1v1h-1zM562 153h1v1h-1zM564 153h1v1h-1zM566 153h1v1h-1zM568 153h1v1h-1zM466 154h2v1h-2zM470 154h1v1h-1zM472 154h1v1h-1zM474 154h1v1h-1zM477 154h4v1h-4zM486 154h1v1h-1zM491 154h1v1h-1zM493 154h1v1h-1zM496 154h1v1h-1zM501 154h1v1h-1zM504 154h1v1h-1zM507 154h1v1h-1zM510 154h1v1h-1zM515 154h2v1h-2zM518 154h2v1h-2zM526 154h1v1h-1zM532 154h1v1h-1zM538 154h1v1h-1zM541 154h2v1h-2zM545 154h1v1h-1zM552 154h1v1h-1zM556 154h1v1h-1zM558 154h1v1h-1zM564 154h1v1h-1zM566 154h1v1h-1zM576 154h1v1h-1zM464 155h2v1h-2zM468 155h2v1h-2zM473 155h2v1h-2zM477 155h1v1h-1zM480 155h1v1h-1zM484 155h2v1h-2zM491 155h2v1h-2zM497 155h2v1h-2zM500 155h1v1h-1zM505 155h2v1h-2zM509 155h2v1h-2zM512 155h3v1h-3zM520 155h3v1h-3zM524 155h3v1h-3zM531 155h2v1h-2zM538 155h1v1h-1zM541 155h1v1h-1zM546 155h1v1h-1zM550 155h2v1h-2zM557 155h1v1h-1zM560 155h11v1h-11zM576 155h1v1h-1z" fill="#008000"/>
<rect x="0" y="103.5" width="113.6" height="12" fill="#fff" />
<text x="1" y="112.5" font-family="Liberation Sans" font-size="9.5" font-weight="normal" fill="#000" text-anchor="start" textLength="111" lengthAdjust="spacingAndGlyphs" stroke="#000" stroke-width="0.25">Moving Average (C,5,S,0,0)</text>
<rect x="0" y="119" width="113.6" height="12" fill="#fff" />
<text x="1" y="128" font-family="Liberation Sans" font-size="9.5" font-weight="normal" fill="#000" text-anchor="start" textLength="111" lengthAdjust="spacingAndGlyphs" stroke="#000" stroke-width="0.25">Bollinger Bands (C, 13, S, 2)</text>
<rect x="0" y="134.5" width="116.8" height="12" fill="#fff" />
<text x="1" y="143.5" font-family="Liberation Sans" font-size="9.5" font-weight="normal" fill="#000" text-anchor="start" textLength="114.5" lengthAdjust="spacingAndGlyphs" stroke="#000" stroke-width="0.25">Moving Average (C,21,S,0,0)</text>
<rect x="0" y="185" width="119" height="12" fill="#fff" />
<text x="1" y="194" font-family="Liberation Sans" font-size="9.5" font-weight="normal" fill="#000" text-anchor="start" textLength="116.8" lengthAdjust="spacingAndGlyphs" stroke="#000" stroke-width="0.25">Moving Average (C,34,S,0,0)</text>
<rect x="0" y="264" width="119.4" height="12" fill="#fff" />
<text x="1" y="273" font-family="Liberation Sans" font-size="9.5" font-weight="normal" fill="#000" text-anchor="start" textLength="116.9" lengthAdjust="spacingAndGlyphs" stroke="#000" stroke-width="0.25">Moving Average (C,55,S,0,0)</text>
<rect x="974.3" y="430" width="5" height="11" fill="url(#shadeD)" />
<rect x="854" y="437" width="120.29999999999995" height="4" fill="url(#shadeD)" />
<rect x="850" y="425" width="124.29999999999995" height="12" fill="#fff" />
<text x="851" y="434" font-family="Liberation Sans" font-size="9.5" font-weight="normal" fill="#000" text-anchor="start" textLength="122" lengthAdjust="spacingAndGlyphs" stroke="#000" stroke-width="0.25">Moving Average (C,200,S,0,0)</text>
<rect x="993" y="49" width="1" height="648" fill="#000" />
<rect x="989" y="51" width="4" height="1" fill="#000" />
<rect x="989" y="58" width="4" height="1" fill="#000" />
<rect x="989" y="66" width="4" height="1" fill="#000" />
<rect x="986" y="73" width="7" height="1" fill="#000" />
<text x="995.5" y="76" font-family="Liberation Sans" font-size="10.5" font-weight="normal" fill="#000" text-anchor="start" textLength="24.5" lengthAdjust="spacingAndGlyphs" >1.3500</text>
<rect x="989" y="80" width="4" height="1" fill="#000" />
<rect x="989" y="88" width="4" height="1" fill="#000" />
<rect x="989" y="95" width="4" height="1" fill="#000" />
<rect x="989" y="102" width="4" height="1" fill="#000" />
<rect x="986" y="109" width="7" height="1" fill="#000" />
<text x="995.5" y="112" font-family="Liberation Sans" font-size="10.5" font-weight="normal" fill="#000" text-anchor="start" textLength="24.5" lengthAdjust="spacingAndGlyphs" >1.3000</text>
<rect x="989" y="117" width="4" height="1" fill="#000" />
<rect x="989" y="124" width="4" height="1" fill="#000" />
<rect x="989" y="131" width="4" height="1" fill="#000" />
<rect x="989" y="139" width="4" height="1" fill="#000" />
<rect x="986" y="146" width="7" height="1" fill="#000" />
<text x="995.5" y="149" font-family="Liberation Sans" font-size="10.5" font-weight="normal" fill="#000" text-anchor="start" textLength="24.5" lengthAdjust="spacingAndGlyphs" >1.2500</text>
<rect x="989" y="153" width="4" height="1" fill="#000" />
<rect x="989" y="160" width="4" height="1" fill="#000" />
<rect x="989" y="168" width="4" height="1" fill="#000" />
<rect x="989" y="175" width="4" height="1" fill="#000" />
<rect x="986" y="182" width="7" height="1" fill="#000" />
<text x="995.5" y="185" font-family="Liberation Sans" font-size="10.5" font-weight="normal" fill="#000" text-anchor="start" textLength="24.5" lengthAdjust="spacingAndGlyphs" >1.2000</text>
<rect x="989" y="189" width="4" height="1" fill="#000" />
<rect x="989" y="197" width="4" height="1" fill="#000" />
<rect x="989" y="204" width="4" height="1" fill="#000" />
<rect x="989" y="211" width="4" height="1" fill="#000" />
<rect x="986" y="219" width="7" height="1" fill="#000" />
<text x="995.5" y="222" font-family="Liberation Sans" font-size="10.5" font-weight="normal" fill="#000" text-anchor="start" textLength="24.5" lengthAdjust="spacingAndGlyphs" >1.1500</text>
<rect x="989" y="226" width="4" height="1" fill="#000" />
<rect x="989" y="233" width="4" height="1" fill="#000" />
<rect x="989" y="240" width="4" height="1" fill="#000" />
<rect x="989" y="248" width="4" height="1" fill="#000" />
<rect x="986" y="255" width="7" height="1" fill="#000" />
<text x="995.5" y="258" font-family="Liberation Sans" font-size="10.5" font-weight="normal" fill="#000" text-anchor="start" textLength="24.5" lengthAdjust="spacingAndGlyphs" >1.1000</text>
<rect x="989" y="262" width="4" height="1" fill="#000" />
<rect x="989" y="270" width="4" height="1" fill="#000" />
<rect x="989" y="277" width="4" height="1" fill="#000" />
<rect x="989" y="284" width="4" height="1" fill="#000" />
<rect x="986" y="291" width="7" height="1" fill="#000" />
<text x="995.5" y="294" font-family="Liberation Sans" font-size="10.5" font-weight="normal" fill="#000" text-anchor="start" textLength="24.5" lengthAdjust="spacingAndGlyphs" >1.0500</text>
<rect x="989" y="299" width="4" height="1" fill="#000" />
<rect x="989" y="306" width="4" height="1" fill="#000" />
<rect x="989" y="313" width="4" height="1" fill="#000" />
<rect x="989" y="321" width="4" height="1" fill="#000" />
<rect x="986" y="328" width="7" height="1" fill="#000" />
<text x="995.5" y="331" font-family="Liberation Sans" font-size="10.5" font-weight="normal" fill="#000" text-anchor="start" textLength="24.5" lengthAdjust="spacingAndGlyphs" >1.0000</text>
<rect x="989" y="335" width="4" height="1" fill="#000" />
<rect x="989" y="342" width="4" height="1" fill="#000" />
<rect x="989" y="350" width="4" height="1" fill="#000" />
<rect x="989" y="357" width="4" height="1" fill="#000" />
<rect x="986" y="364" width="7" height="1" fill="#000" />
<text x="995.5" y="367" font-family="Liberation Sans" font-size="10.5" font-weight="normal" fill="#000" text-anchor="start" textLength="24.5" lengthAdjust="spacingAndGlyphs" >0.9500</text>
<rect x="989" y="371" width="4" height="1" fill="#000" />
<rect x="989" y="379" width="4" height="1" fill="#000" />
<rect x="989" y="386" width="4" height="1" fill="#000" />
<rect x="989" y="393" width="4" height="1" fill="#000" />
<rect x="986" y="401" width="7" height="1" fill="#000" />
<text x="995.5" y="404" font-family="Liberation Sans" font-size="10.5" font-weight="normal" fill="#000" text-anchor="start" textLength="24.5" lengthAdjust="spacingAndGlyphs" >0.9000</text>
<rect x="989" y="408" width="4" height="1" fill="#000" />
<rect x="989" y="415" width="4" height="1" fill="#000" />
<rect x="989" y="422" width="4" height="1" fill="#000" />
<rect x="989" y="430" width="4" height="1" fill="#000" />
<rect x="986" y="437" width="7" height="1" fill="#000" />
<text x="995.5" y="440" font-family="Liberation Sans" font-size="10.5" font-weight="normal" fill="#000" text-anchor="start" textLength="24.5" lengthAdjust="spacingAndGlyphs" >0.8500</text>
<rect x="989" y="444" width="4" height="1" fill="#000" />
<rect x="989" y="452" width="4" height="1" fill="#000" />
<rect x="989" y="459" width="4" height="1" fill="#000" />
<rect x="989" y="466" width="4" height="1" fill="#000" />
<rect x="995" y="132" width="28" height="14" fill="#800000" stroke="#400000" stroke-width="1"/>
<text x="996.5" y="143" font-family="Liberation Sans" font-size="10.5" font-weight="normal" fill="#fff" text-anchor="start" textLength="24" lengthAdjust="spacingAndGlyphs" >1.2609</text>
<rect x="0" y="467" width="1023" height="3" fill="#d6d6d6" />
<rect x="0" y="467" width="1023" height="1" fill="url(#sepdots)" />
<rect x="0" y="469" width="1023" height="1" fill="url(#sepdots)" />
<rect x="0" y="575" width="1023" height="3" fill="#d6d6d6" />
<rect x="0" y="575" width="1023" height="1" fill="url(#sepdots)" />
<rect x="0" y="577" width="1023" height="1" fill="url(#sepdots)" />
<line x1="0" y1="494.5" x2="986" y2="494.5" stroke="#c4c4c4" stroke-dasharray="3,3"/>
<line x1="0" y1="555.5" x2="986" y2="555.5" stroke="#b4e2b4" stroke-dasharray="3,3"/>
<line x1="0" y1="524.5" x2="986" y2="524.5" stroke="#ff0000" stroke-dasharray="3,3"/>
<svg x="0" y="469" width="993" height="107" viewBox="0 469 993 107" overflow="hidden">
<rect x="274" y="512" width="1" height="12" fill="#008080" />
<rect x="281" y="513" width="1" height="11" fill="#008080" />
<rect x="288" y="513" width="1" height="11" fill="#008080" />
<rect x="295" y="514" width="1" height="10" fill="#008080" />
<rect x="302" y="517" width="1" height="7" fill="#008080" />
<rect x="309" y="521" width="1" height="3" fill="#008080" />
<rect x="323" y="524" width="1" height="2" fill="#008080" />
<rect x="330" y="524" width="1" height="3" fill="#008080" />
<rect x="337" y="524" width="1" height="3" fill="#008080" />
<rect x="343" y="524" width="1" height="3" fill="#008080" />
<rect x="350" y="524" width="1" height="3" fill="#008080" />
<rect x="357" y="524" width="1" height="2" fill="#008080" />
<rect x="364" y="524" width="1" height="3" fill="#008080" />
<rect x="371" y="524" width="1" height="3" fill="#008080" />
<rect x="378" y="524" width="1" height="4" fill="#008080" />
<rect x="385" y="524" width="1" height="5" fill="#008080" />
<rect x="392" y="524" width="1" height="5" fill="#008080" />
<rect x="399" y="524" width="1" height="6" fill="#008080" />
<rect x="406" y="524" width="1" height="6" fill="#008080" />
<rect x="413" y="524" width="1" height="6" fill="#008080" />
<rect x="419" y="524" width="1" height="5" fill="#008080" />
<rect x="426" y="524" width="1" height="5" fill="#008080" />
<rect x="433" y="524" width="1" height="6" fill="#008080" />
<rect x="440" y="524" width="1" height="7" fill="#008080" />
<rect x="447" y="524" width="1" height="7" fill="#008080" />
<rect x="454" y="524" width="1" height="4" fill="#008080" />
<rect x="468" y="523" width="1" height="1" fill="#008080" />
<rect x="475" y="523" width="1" height="1" fill="#008080" />
<rect x="482" y="522" width="1" height="2" fill="#008080" />
<rect x="489" y="523" width="1" height="1" fill="#008080" />
<rect x="502" y="523" width="1" height="1" fill="#008080" />
<rect x="509" y="520" width="1" height="4" fill="#008080" />
<rect x="516" y="519" width="1" height="5" fill="#008080" />
<rect x="523" y="518" width="1" height="6" fill="#008080" />
<rect x="530" y="519" width="1" height="5" fill="#008080" />
<rect x="537" y="519" width="1" height="5" fill="#008080" />
<rect x="544" y="520" width="1" height="4" fill="#008080" />
<rect x="551" y="521" width="1" height="3" fill="#008080" />
<rect x="558" y="521" width="1" height="3" fill="#008080" />
<rect x="565" y="520" width="1" height="4" fill="#008080" />
<rect x="572" y="518" width="1" height="6" fill="#008080" />
<rect x="578" y="515" width="1" height="9" fill="#008080" />
<rect x="585" y="514" width="1" height="10" fill="#008080" />
<rect x="592" y="513" width="1" height="11" fill="#008080" />
<rect x="599" y="513" width="1" height="11" fill="#008080" />
<rect x="606" y="514" width="1" height="10" fill="#008080" />
<rect x="613" y="514" width="1" height="10" fill="#008080" />
<rect x="620" y="513" width="1" height="11" fill="#008080" />
<rect x="627" y="512" width="1" height="12" fill="#008080" />
<rect x="634" y="512" width="1" height="12" fill="#008080" />
<rect x="641" y="512" width="1" height="12" fill="#008080" />
<rect x="648" y="512" width="1" height="12" fill="#008080" />
<rect x="654" y="510" width="1" height="14" fill="#008080" />
<rect x="661" y="511" width="1" height="13" fill="#008080" />
<rect x="668" y="513" width="1" height="11" fill="#008080" />
<rect x="675" y="517" width="1" height="7" fill="#008080" />
<rect x="682" y="517" width="1" height="7" fill="#008080" />
<rect x="689" y="518" width="1" height="6" fill="#008080" />
<rect x="696" y="517" width="1" height="7" fill="#008080" />
<rect x="703" y="516" width="1" height="8" fill="#008080" />
<rect x="710" y="516" width="1" height="8" fill="#008080" />
<rect x="717" y="516" width="1" height="8" fill="#008080" />
<rect x="724" y="518" width="1" height="6" fill="#008080" />
<rect x="730" y="522" width="1" height="2" fill="#008080" />
<rect x="751" y="524" width="1" height="3" fill="#008080" />
<rect x="758" y="524" width="1" height="3" fill="#008080" />
<rect x="765" y="524" width="1" height="3" fill="#008080" />
<rect x="772" y="524" width="1" height="2" fill="#008080" />
<rect x="786" y="521" width="1" height="3" fill="#008080" />
<rect x="793" y="522" width="1" height="2" fill="#008080" />
<rect x="800" y="523" width="1" height="1" fill="#008080" />
<rect x="813" y="524" width="1" height="2" fill="#008080" />
<rect x="820" y="524" width="1" height="5" fill="#008080" />
<polyline points="274.5,551.8 281.5,548.9 288.5,546.2 295.5,543.6 302.5,541.8 309.5,540.8 316.5,540.5 323.5,540.8 330.5,541.3 337.5,542.0 343.5,542.6 350.5,543.2 357.5,543.4 364.5,543.9 371.5,544.5 378.5,545.5 385.5,546.6 392.5,547.6 399.5,548.9 406.5,550.3 413.5,551.6 419.5,552.8 426.5,554.0 433.5,555.3 440.5,557.0 447.5,558.6 454.5,559.4 461.5,559.5 468.5,559.0 475.5,558.6 482.5,558.0 489.5,557.5 495.5,557.2 502.5,556.8 509.5,555.7 516.5,554.2 523.5,552.7 530.5,551.2 537.5,549.8 544.5,548.7 551.5,547.8 558.5,547.0 565.5,545.8 572.5,544.2 578.5,541.8 585.5,539.0 592.5,536.2 599.5,533.3 606.5,530.6 613.5,528.0 620.5,525.1 627.5,521.9 634.5,518.7 641.5,515.5 648.5,512.2 654.5,508.6 661.5,505.2 668.5,502.4 675.5,500.4 682.5,498.5 689.5,496.8 696.5,495.0 703.5,492.7 710.5,490.5 717.5,488.4 724.5,486.9 730.5,486.1 737.5,485.8 744.5,485.8 751.5,486.4 758.5,487.1 765.5,487.7 772.5,488.1 779.5,487.7 786.5,486.8 793.5,486.2 800.5,485.8 806.5,485.8 813.5,486.2 820.5,487.2" fill="none" stroke="#ff0000" stroke-width="1" />
<polyline points="219.5,559.1 226.5,558.5 233.5,556.8 240.5,554.3 247.5,553.3 254.5,551.4 261.5,549.0 267.5,544.5 274.5,539.2 281.5,537.5 288.5,535.0 295.5,533.3 302.5,534.5 309.5,536.8 316.5,539.2 323.5,541.9 330.5,543.6 337.5,544.5 343.5,545.1 350.5,545.5 357.5,544.4 364.5,545.9 371.5,546.9 378.5,549.2 385.5,550.9 392.5,551.8 399.5,554.1 406.5,555.9 413.5,556.7 419.5,557.6 426.5,558.9 433.5,560.7 440.5,563.5 447.5,565.3 454.5,562.7 461.5,559.5 468.5,557.2 475.5,556.8 482.5,555.5 489.5,555.8 495.5,556.1 502.5,554.8 509.5,551.3 516.5,548.5 523.5,546.4 530.5,545.2 537.5,544.3 544.5,544.5 551.5,544.2 558.5,543.5 565.5,541.2 572.5,537.8 578.5,532.1 585.5,528.1 592.5,524.8 599.5,522.0 606.5,519.6 613.5,517.6 620.5,513.5 627.5,509.1 634.5,505.7 641.5,502.7 648.5,499.3 654.5,494.0 661.5,491.5 668.5,491.3 675.5,492.6 682.5,490.7 689.5,490.0 696.5,487.8 703.5,483.7 710.5,481.5 717.5,480.2 724.5,480.7 730.5,483.1 737.5,484.4 744.5,486.0 751.5,488.5 758.5,490.0 765.5,490.4 772.5,489.3 779.5,486.3 786.5,483.2 793.5,483.8 800.5,484.0 806.5,485.8 813.5,488.0 820.5,491.4" fill="none" stroke="#0000ff" stroke-width="1" />
</svg>
<line x1="795" y1="530.5" x2="826" y2="528.5" stroke="#800000" stroke-width="1"/>
<rect x="101" y="485" width="5" height="11" fill="url(#shadeL)" />
<rect x="4" y="492" width="97" height="4" fill="url(#shadeL)" />
<rect x="0" y="480" width="101" height="12" fill="#fff" />
<text x="1" y="489" font-family="Liberation Sans" font-size="9.5" font-weight="normal" fill="#000" text-anchor="start" textLength="99.1" lengthAdjust="spacingAndGlyphs" stroke="#000" stroke-width="0.25">MACD (9, E, 12, 26, C, E)</text>
<rect x="989" y="573" width="4" height="1" fill="#000" />
<rect x="989" y="567" width="4" height="1" fill="#000" />
<rect x="989" y="561" width="4" height="1" fill="#000" />
<rect x="986" y="555" width="7" height="1" fill="#000" />
<text x="994.5" y="558.5" font-family="Liberation Sans" font-size="10.5" font-weight="normal" fill="#000" text-anchor="start" textLength="21.5" lengthAdjust="spacingAndGlyphs" >-0.05</text>
<rect x="989" y="549" width="4" height="1" fill="#000" />
<rect x="989" y="543" width="4" height="1" fill="#000" />
<rect x="989" y="537" width="4" height="1" fill="#000" />
<rect x="989" y="531" width="4" height="1" fill="#000" />
<rect x="986" y="525" width="7" height="1" fill="#000" />
<text x="995.5" y="528.5" font-family="Liberation Sans" font-size="10.5" font-weight="normal" fill="#000" text-anchor="start" textLength="18.5" lengthAdjust="spacingAndGlyphs" >0.00</text>
<rect x="989" y="519" width="4" height="1" fill="#000" />
<rect x="989" y="512" width="4" height="1" fill="#000" />
<rect x="989" y="506" width="4" height="1" fill="#000" />
<rect x="989" y="500" width="4" height="1" fill="#000" />
<rect x="986" y="494" width="7" height="1" fill="#000" />
<text x="995.5" y="497.5" font-family="Liberation Sans" font-size="10.5" font-weight="normal" fill="#000" text-anchor="start" textLength="18.5" lengthAdjust="spacingAndGlyphs" >0.05</text>
<rect x="989" y="488" width="4" height="1" fill="#000" />
<rect x="989" y="482" width="4" height="1" fill="#000" />
<rect x="989" y="476" width="4" height="1" fill="#000" />
<line x1="0" y1="598.5" x2="986" y2="598.5" stroke="#b4e2b4" stroke-dasharray="3,3"/>
<line x1="0" y1="617.5" x2="986" y2="617.5" stroke="#b4e2b4" stroke-dasharray="3,3"/>
<line x1="0" y1="636.5" x2="986" y2="636.5" stroke="#b4e2b4" stroke-dasharray="3,3"/>
<line x1="0" y1="655.5" x2="986" y2="655.5" stroke="#b4e2b4" stroke-dasharray="3,3"/>
<line x1="0" y1="674.5" x2="986" y2="674.5" stroke="#b4e2b4" stroke-dasharray="3,3"/>
<line x1="0" y1="630.5" x2="986" y2="630.5" stroke="#909090" stroke-dasharray="3,3"/>
<line x1="0" y1="603.5" x2="986" y2="603.5" stroke="#ff0000" stroke-dasharray="3,3"/>
<line x1="0" y1="657.5" x2="986" y2="657.5" stroke="#ff0000" stroke-dasharray="3,3"/>
<polyline points="226.5,647.7 233.5,642.9 240.5,638.2 247.5,643.7 254.5,639.0 261.5,635.6 267.5,623.8 274.5,618.1 281.5,630.4 288.5,626.1 295.5,628.3 302.5,638.9 309.5,643.9 316.5,646.3 323.5,649.2 330.5,648.4 337.5,646.9 343.5,647.5 350.5,647.8 357.5,641.0 364.5,650.8 371.5,651.3 378.5,656.9 385.5,657.5 392.5,656.8 399.5,662.4 406.5,663.4 413.5,661.4 419.5,663.3 426.5,666.2 433.5,669.1 440.5,673.2 447.5,673.2 454.5,647.3 461.5,643.5 468.5,645.5 475.5,652.0 482.5,648.1 489.5,653.6 495.5,655.0 502.5,647.2 509.5,636.0 516.5,637.4 523.5,638.5 530.5,641.9 537.5,642.7 544.5,647.5 551.5,646.1 558.5,644.3 565.5,634.8 572.5,626.6 578.5,614.7 585.5,618.0 592.5,617.3 599.5,616.4 606.5,615.7 613.5,614.8 620.5,604.7 627.5,600.4 634.5,600.2 641.5,598.5 648.5,595.0 654.5,588.7 661.5,598.2 668.5,606.9 675.5,613.5 682.5,604.0 689.5,606.5 696.5,601.3 703.5,595.7 710.5,599.1 717.5,598.8 724.5,605.2 730.5,613.0 737.5,609.9 744.5,611.1 751.5,615.1 758.5,612.1 765.5,608.5 772.5,603.6 779.5,597.7 786.5,595.3 793.5,609.2 800.5,607.3 806.5,613.1 813.5,615.1 820.5,621.0" fill="none" stroke="#008080" stroke-width="1" />
<rect x="111" y="615" width="5" height="11" fill="url(#shadeL)" />
<rect x="4" y="622" width="107" height="4" fill="url(#shadeL)" />
<rect x="0" y="610" width="111" height="12" fill="#fff" />
<text x="1" y="619" font-family="Liberation Sans" font-size="9.5" font-weight="normal" fill="#000" text-anchor="start" textLength="109.1" lengthAdjust="spacingAndGlyphs" stroke="#000" stroke-width="0.25">Relative Strength Index (14)</text>
<rect x="986" y="598" width="7" height="1" fill="#000" />
<text x="995.5" y="601.5" font-family="Liberation Sans" font-size="10.5" font-weight="normal" fill="#000" text-anchor="start" textLength="18.5" lengthAdjust="spacingAndGlyphs" >74.0</text>
<rect x="986" y="617" width="7" height="1" fill="#000" />
<text x="995.5" y="620.5" font-family="Liberation Sans" font-size="10.5" font-weight="normal" fill="#000" text-anchor="start" textLength="18.5" lengthAdjust="spacingAndGlyphs" >60.0</text>
<rect x="986" y="636" width="7" height="1" fill="#000" />
<text x="995.5" y="639.5" font-family="Liberation Sans" font-size="10.5" font-weight="normal" fill="#000" text-anchor="start" textLength="18.5" lengthAdjust="spacingAndGlyphs" >46.0</text>
<rect x="986" y="655" width="7" height="1" fill="#000" />
<text x="995.5" y="658.5" font-family="Liberation Sans" font-size="10.5" font-weight="normal" fill="#000" text-anchor="start" textLength="18.5" lengthAdjust="spacingAndGlyphs" >32.0</text>
<rect x="986" y="674" width="7" height="1" fill="#000" />
<text x="995.5" y="677.5" font-family="Liberation Sans" font-size="10.5" font-weight="normal" fill="#000" text-anchor="start" textLength="18.5" lengthAdjust="spacingAndGlyphs" >18.0</text>
<rect x="893" y="49" width="1" height="634" fill="#9cb4ea" />
<rect x="0" y="683" width="1024" height="1" fill="#000" />
<rect x="46" y="677" width="1" height="6" fill="#000" />
<rect x="122" y="677" width="1" height="6" fill="#000" />
<rect x="184" y="677" width="1" height="6" fill="#000" />
<rect x="267" y="677" width="1" height="6" fill="#000" />
<rect x="350" y="677" width="1" height="6" fill="#000" />
<rect x="433" y="677" width="1" height="6" fill="#000" />
<rect x="516" y="677" width="1" height="6" fill="#000" />
<rect x="599" y="677" width="1" height="6" fill="#000" />
<rect x="682" y="677" width="1" height="6" fill="#000" />
<rect x="765" y="677" width="1" height="6" fill="#000" />
<rect x="924" y="677" width="1" height="6" fill="#000" />
<rect x="958" y="677" width="1" height="6" fill="#000" />
<rect x="11" y="677" width="1" height="6" fill="#000" />
<rect x="205" y="677" width="1" height="6" fill="#000" />
<rect x="288" y="677" width="1" height="6" fill="#000" />
<rect x="371" y="677" width="1" height="6" fill="#000" />
<rect x="454" y="677" width="1" height="6" fill="#000" />
<rect x="537" y="677" width="1" height="6" fill="#000" />
<rect x="620" y="677" width="1" height="6" fill="#000" />
<rect x="703" y="677" width="1" height="6" fill="#000" />
<rect x="786" y="677" width="1" height="6" fill="#000" />
<rect x="855" y="677" width="1" height="6" fill="#000" />
<path d="M36 687h6v1h-6zM35 693h8v1h-8zM43 692h1v1h-1zM49 686h6v1h-6zM49 688h6v1h-6zM49 691h6v1h-6zM49 686h1v7h-1zM54 686h1v8h-1zM48 693h1v1h-1zM47 694h1v1h-1zM53 694h1v1h-1zM177 685h1v10h-1zM173 689h9v1h-9zM187 686h6v1h-6zM187 688h6v1h-6zM187 691h6v1h-6zM187 686h1v7h-1zM192 686h1v8h-1zM186 693h1v1h-1zM185 694h1v1h-1zM191 694h1v1h-1zM260 685h1v10h-1zM256 689h9v1h-9zM270 686h6v1h-6zM270 688h6v1h-6zM270 691h6v1h-6zM270 686h1v7h-1zM275 686h1v8h-1zM269 693h1v1h-1zM268 694h1v1h-1zM274 694h1v1h-1zM343 685h1v10h-1zM339 689h9v1h-9zM353 686h6v1h-6zM353 688h6v1h-6zM353 691h6v1h-6zM353 686h1v7h-1zM358 686h1v8h-1zM352 693h1v1h-1zM351 694h1v1h-1zM357 694h1v1h-1zM426 685h1v10h-1zM422 689h9v1h-9zM436 686h6v1h-6zM436 688h6v1h-6zM436 691h6v1h-6zM436 686h1v7h-1zM441 686h1v8h-1zM435 693h1v1h-1zM434 694h1v1h-1zM440 694h1v1h-1zM509 685h1v10h-1zM505 689h9v1h-9zM519 686h6v1h-6zM519 688h6v1h-6zM519 691h6v1h-6zM519 686h1v7h-1zM524 686h1v8h-1zM518 693h1v1h-1zM517 694h1v1h-1zM523 694h1v1h-1zM592 685h1v10h-1zM588 689h9v1h-9zM602 686h6v1h-6zM602 688h6v1h-6zM602 691h6v1h-6zM602 686h1v7h-1zM607 686h1v8h-1zM601 693h1v1h-1zM600 694h1v1h-1zM606 694h1v1h-1zM675 685h1v10h-1zM671 689h9v1h-9zM685 686h6v1h-6zM685 688h6v1h-6zM685 691h6v1h-6zM685 686h1v7h-1zM690 686h1v8h-1zM684 693h1v1h-1zM683 694h1v1h-1zM689 694h1v1h-1zM758 685h1v10h-1zM754 689h9v1h-9zM768 686h6v1h-6zM768 688h6v1h-6zM768 691h6v1h-6zM768 686h1v7h-1zM773 686h1v8h-1zM767 693h1v1h-1zM766 694h1v1h-1zM772 694h1v1h-1z" fill="#000"/>
<text x="122.5" y="694" font-family="Liberation Sans" font-size="9.5" font-weight="normal" fill="#000" text-anchor="middle" textLength="17.4" lengthAdjust="spacingAndGlyphs" stroke="#000" stroke-width="0.3">1997</text>
<rect x="0" y="697" width="1024" height="45" fill="#ece9d8" />
<rect x="0" y="699" width="1024" height="1" fill="#9a8e8e" />
<rect x="1" y="700" width="18" height="14" fill="#f0eee4" />
<rect x="1" y="699" width="1" height="14" fill="#909090" />
<rect x="18" y="700" width="1" height="13" fill="#707070" />
<path d="M7 708.5l4-4v8z" fill="#000"/>
<rect x="19" y="700" width="459" height="13" fill="#faf8e8" />
<rect x="478" y="700" width="17" height="15" fill="#ece9d8" />
<rect x="478" y="714" width="17" height="1" fill="#808080" />
<rect x="494" y="700" width="1" height="15" fill="#808080" />
<rect x="478" y="700" width="17" height="1" fill="#fff" />
<rect x="495" y="700" width="17" height="15" fill="#ece9d8" />
<rect x="495" y="714" width="17" height="1" fill="#808080" />
<rect x="511" y="700" width="1" height="15" fill="#808080" />
<rect x="495" y="700" width="1" height="15" fill="#fff" />
<path d="M502 704l4 4-4 4z" fill="#000"/>
<rect x="517" y="701" width="1" height="14" fill="#a0a0a0" />
<rect x="518" y="701" width="1" height="14" fill="#fff" />
<text x="524.6" y="713" font-family="Liberation Sans" font-size="11" font-weight="normal" fill="#000" text-anchor="start" textLength="41.4" lengthAdjust="spacingAndGlyphs" >EUR/USD</text>
<path d="M570.5 708h5l-2.5 3z" fill="#000"/>
<text x="583" y="713" font-family="Liberation Sans" font-size="11" font-weight="normal" fill="#000" text-anchor="start" textLength="9" lengthAdjust="spacingAndGlyphs" >M</text>
<path d="M593.5 708h5l-2.5 3z" fill="#000"/>
<text x="606" y="713" font-family="Liberation Sans" font-size="11" font-weight="normal" fill="#000" text-anchor="start" textLength="17" lengthAdjust="spacingAndGlyphs" >BID</text>
<path d="M626 708h5l-2.5 3z" fill="#000"/>
<rect x="643" y="702.8" width="1" height="12.7" fill="#ff0000" />
<rect x="641" y="704.8" width="5" height="8" fill="#ff0000" />
<path d="M649 708h5l-2.5 3z" fill="#000"/>
<rect x="660" y="701" width="1" height="14" fill="#a0a0a0" />
<rect x="661" y="701" width="1" height="14" fill="#fff" />
<rect x="664" y="702" width="50" height="14" fill="#f4f2ea" />
<rect x="664" y="702" width="50" height="1" fill="#909090" />
<rect x="664" y="702" width="1" height="14" fill="#909090" />
<rect x="682" y="702" width="1" height="14" fill="#c0c0c0" />
<rect x="697" y="702" width="1" height="14" fill="#c0c0c0" />
<path d="M668 708.5h9M673.5 705l3.5 3.5-3.5 3.5M678.5 703.5v10M686.5 703.5h8M690.5 703.5v10M686.5 713.5h8M688 706.5l2.5-2 2.5 2M688 710.5l2.5 2 2.5-2M701.5 703v11M705.5 703v11M699 706.5h9M699 710.5h9" stroke="#000" fill="none"/>
<text x="716.5" y="712" font-family="Liberation Sans" font-size="8" font-weight="bold" fill="#000" text-anchor="start" textLength="5.5" lengthAdjust="spacingAndGlyphs" >Q</text>
<rect x="729" y="701" width="1" height="14" fill="#a0a0a0" />
<rect x="730" y="701" width="1" height="14" fill="#fff" />
<path d="M737.5 703.5v10l2.5-2.5 3 5 2-1-3-5h4z" fill="#fff" stroke="#000" shape-rendering="auto"/>
<path d="M748.5 708h5l-2.5 3z" fill="#000"/>
<path d="M760 706.5l4.5-3.5 3.5 6 3.5-6.5" stroke="#0000ff" fill="none" shape-rendering="auto"/><path d="M763 707l4 8.5" stroke="#ff0000" stroke-width="1.5" shape-rendering="auto"/><path d="M762 706l3.5 1.5-3 2z" fill="#ff0000"/>
<rect x="776.5" y="702.5" width="5" height="5" fill="none" stroke="#0000ff"/>
<rect x="782.5" y="709.5" width="5" height="5" fill="none" stroke="#0000ff"/>
<path d="M780 706l4 4" stroke="#ff0000"/>
<rect x="792" y="701" width="1" height="14" fill="#a0a0a0" />
<rect x="793" y="701" width="1" height="14" fill="#fff" />
<circle cx="802.5" cy="707.5" r="4.5" fill="#fff" stroke="#000" stroke-width="1.3" shape-rendering="auto"/><path d="M800 707.5h5M802.5 705v5" stroke="#ff0000"/><path d="M806 711l3.5 3.5" stroke="#000" stroke-width="2.2" shape-rendering="auto"/><path d="M808 713l1.5 1.5" stroke="#ffd000" stroke-width="1.5"/>
<path d="M819.5 702v13M815 708.5h3M821 708.5h4" stroke="#ff0000"/><path d="M816 706.5l2 2-2 2M823 706.5l-2 2 2 2" stroke="#ff0000" fill="none"/><path d="M819.5 702v13" stroke="#000"/>
<path d="M836.5 702v13M831 706.5h12" stroke="#000"/><path d="M831 711.5h12M833 709.5l-2 2 2 2M841 709.5l2 2-2 2" stroke="#ff0000" fill="none"/>
<path d="M850.5 702v13M854.5 702v13M848 708.5h9" stroke="#000"/><path d="M852.5 702v13M850.5 704l2-2 2 2M850.5 713l2 2 2-2" stroke="#ff0000" fill="none"/>
<path d="M863 708.5h10" stroke="#000"/><path d="M867.5 702v13M865.5 704l2-2 2 2M865.5 713l2 2 2-2" stroke="#ff0000" fill="none"/>
<circle cx="884.5" cy="709" r="5.5" fill="#d8e8f8" stroke="#000" stroke-width="1.2" shape-rendering="auto"/><path d="M881 706l6 6M887 712h-4M887 712v-4" stroke="#0050e0" stroke-width="1.6" fill="none" shape-rendering="auto"/><path d="M889 713l2 3" stroke="#000" stroke-width="1.5"/>
<rect x="894" y="701" width="1" height="14" fill="#a0a0a0" />
<rect x="895" y="701" width="1" height="14" fill="#fff" />
<text x="907" y="712" font-family="Liberation Sans" font-size="6.5" font-weight="bold" fill="#000" text-anchor="middle" textLength="8" lengthAdjust="spacingAndGlyphs" >1:1</text>
<path d="M907 702.5l-3 3h6zM907 716l-3-3h6z" fill="#ff0000"/>
<text x="922.5" y="712" font-family="Liberation Sans" font-size="6.5" font-weight="bold" fill="#000" text-anchor="middle" textLength="8" lengthAdjust="spacingAndGlyphs" >1:1</text>
<path d="M914.5 709l3-3v6zM930.5 709l-3-3v6z" fill="#ff0000"/>
<text x="938.5" y="712" font-family="Liberation Sans" font-size="6.5" font-weight="bold" fill="#000" text-anchor="middle" textLength="8" lengthAdjust="spacingAndGlyphs" >1:1</text>
<path d="M938.5 702.5l-3 3h6zM938.5 716l-3-3h6z" fill="#ff0000"/>
<path d="M930.5 709l3-3v6zM946.5 709l-3-3v6z" fill="#ff0000"/>
<rect x="947" y="701" width="1" height="14" fill="#a0a0a0" />
<rect x="948" y="701" width="1" height="14" fill="#fff" />
<path d="M955.5 702.5h6l2.5 2.5v11h-8.5z" fill="#fff" stroke="#000"/><path d="M957.5 708l2 3 3-5" stroke="#000" fill="none"/>
<path d="M968 705h8v3h-8zM967.5 712h13" stroke="none" fill="#ff0000"/><path d="M967 711.5h9l4 1" stroke="#ff0000" stroke-width="1.5" fill="none"/><path d="M967 704.5v7" stroke="#ff0000"/>
<path d="M981 708h5l-2.5 3z" fill="#000"/>
<text x="992.4" y="713" font-family="Liberation Sans" font-size="11" font-weight="normal" fill="#000" text-anchor="start" textLength="16.2" lengthAdjust="spacingAndGlyphs" >N/A</text>
<path d="M1011 708.5h5l-2.5 3z" fill="#000"/>
<rect x="0" y="720" width="1024" height="1" fill="#c8c0b8" />
<rect x="763.5" y="721.5" width="135" height="16" fill="none" stroke="#a8a8a0" stroke-width="1"/>
<rect x="899.5" y="721.5" width="87" height="16" fill="none" stroke="#a8a8a0" stroke-width="1"/>
<path d="M766 725h3v1h-3zM765 726h1v1h-1zM769 726h1v1h-1zM765 727h1v1h-1zM769 727h1v1h-1zM765 728h1v1h-1zM769 728h1v1h-1zM765 729h1v1h-1zM769 729h1v1h-1zM765 730h1v1h-1zM769 730h1v1h-1zM765 731h1v1h-1zM769 731h1v1h-1zM766 732h3v1h-3zM772 725h3v1h-3zM771 726h1v1h-1zM771 727h1v1h-1zM771 728h4v1h-4zM771 729h1v1h-1zM775 729h1v1h-1zM771 730h1v1h-1zM775 730h1v1h-1zM771 731h1v1h-1zM775 731h1v1h-1zM772 732h3v1h-3zM780 722h1v1h-1zM780 723h1v1h-1zM780 724h1v1h-1zM779 725h1v1h-1zM779 726h1v1h-1zM779 727h1v1h-1zM778 728h1v1h-1zM778 729h1v1h-1zM778 730h1v1h-1zM777 731h1v1h-1zM777 732h1v1h-1zM777 733h1v1h-1zM784 725h3v1h-3zM783 726h1v1h-1zM787 726h1v1h-1zM783 727h1v1h-1zM787 727h1v1h-1zM783 728h1v1h-1zM787 728h1v1h-1zM783 729h1v1h-1zM787 729h1v1h-1zM783 730h1v1h-1zM787 730h1v1h-1zM783 731h1v1h-1zM787 731h1v1h-1zM784 732h3v1h-3zM789 725h3v1h-3zM791 726h1v1h-1zM791 727h1v1h-1zM791 728h1v1h-1zM791 729h1v1h-1zM791 730h1v1h-1zM791 731h1v1h-1zM789 732h5v1h-5zM798 722h1v1h-1zM798 723h1v1h-1zM798 724h1v1h-1zM797 725h1v1h-1zM797 726h1v1h-1zM797 727h1v1h-1zM796 728h1v1h-1zM796 729h1v1h-1zM796 730h1v1h-1zM795 731h1v1h-1zM795 732h1v1h-1zM795 733h1v1h-1zM802 725h3v1h-3zM801 726h1v1h-1zM805 726h1v1h-1zM801 727h1v1h-1zM805 727h1v1h-1zM801 728h1v1h-1zM805 728h1v1h-1zM801 729h1v1h-1zM805 729h1v1h-1zM801 730h1v1h-1zM805 730h1v1h-1zM801 731h1v1h-1zM805 731h1v1h-1zM802 732h3v1h-3zM807 725h4v1h-4zM807 726h1v1h-1zM807 727h1v1h-1zM807 728h4v1h-4zM811 729h1v1h-1zM811 730h1v1h-1zM811 731h1v1h-1zM807 732h4v1h-4zM820 725h3v1h-3zM819 726h1v1h-1zM823 726h1v1h-1zM819 727h1v1h-1zM823 727h1v1h-1zM819 728h1v1h-1zM823 728h1v1h-1zM819 729h1v1h-1zM823 729h1v1h-1zM819 730h1v1h-1zM823 730h1v1h-1zM819 731h1v1h-1zM823 731h1v1h-1zM820 732h3v1h-3zM826 725h3v1h-3zM825 726h1v1h-1zM829 726h1v1h-1zM825 727h1v1h-1zM829 727h1v1h-1zM825 728h1v1h-1zM829 728h1v1h-1zM825 729h1v1h-1zM829 729h1v1h-1zM825 730h1v1h-1zM829 730h1v1h-1zM825 731h1v1h-1zM829 731h1v1h-1zM826 732h3v1h-3zM831 727h1v1h-1zM831 728h1v1h-1zM831 731h1v1h-1zM831 732h1v1h-1zM838 725h3v1h-3zM837 726h1v1h-1zM841 726h1v1h-1zM837 727h1v1h-1zM841 727h1v1h-1zM837 728h1v1h-1zM841 728h1v1h-1zM837 729h1v1h-1zM841 729h1v1h-1zM837 730h1v1h-1zM841 730h1v1h-1zM837 731h1v1h-1zM841 731h1v1h-1zM838 732h3v1h-3zM844 725h3v1h-3zM843 726h1v1h-1zM847 726h1v1h-1zM843 727h1v1h-1zM847 727h1v1h-1zM843 728h1v1h-1zM847 728h1v1h-1zM843 729h1v1h-1zM847 729h1v1h-1zM843 730h1v1h-1zM847 730h1v1h-1zM843 731h1v1h-1zM847 731h1v1h-1zM844 732h3v1h-3zM862 725h3v1h-3zM861 726h1v1h-1zM865 726h1v1h-1zM861 727h1v1h-1zM865 727h1v1h-1zM861 728h1v1h-1zM865 728h1v1h-1zM861 729h1v1h-1zM865 729h1v1h-1zM861 730h1v1h-1zM865 730h1v1h-1zM861 731h1v1h-1zM865 731h1v1h-1zM862 732h3v1h-3zM869 731h1v1h-1zM869 732h1v1h-1zM874 725h3v1h-3zM873 726h1v1h-1zM877 726h1v1h-1zM873 727h1v1h-1zM877 727h1v1h-1zM874 728h3v1h-3zM873 729h1v1h-1zM877 729h1v1h-1zM873 730h1v1h-1zM877 730h1v1h-1zM873 731h1v1h-1zM877 731h1v1h-1zM874 732h3v1h-3zM880 725h3v1h-3zM879 726h1v1h-1zM883 726h1v1h-1zM883 727h1v1h-1zM883 728h1v1h-1zM882 729h1v1h-1zM881 730h1v1h-1zM880 731h1v1h-1zM879 732h5v1h-5zM886 725h3v1h-3zM885 726h1v1h-1zM889 726h1v1h-1zM885 727h1v1h-1zM889 727h1v1h-1zM885 728h1v1h-1zM889 728h1v1h-1zM886 729h4v1h-4zM889 730h1v1h-1zM885 731h1v1h-1zM889 731h1v1h-1zM886 732h3v1h-3zM891 725h4v1h-4zM891 726h1v1h-1zM891 727h1v1h-1zM891 728h4v1h-4zM895 729h1v1h-1zM895 730h1v1h-1zM895 731h1v1h-1zM891 732h4v1h-4zM902 725h3v1h-3zM901 726h1v1h-1zM905 726h1v1h-1zM901 727h1v1h-1zM905 727h1v1h-1zM901 728h1v1h-1zM905 728h1v1h-1zM901 729h1v1h-1zM905 729h1v1h-1zM901 730h1v1h-1zM905 730h1v1h-1zM901 731h1v1h-1zM905 731h1v1h-1zM902 732h3v1h-3zM907 725h4v1h-4zM907 726h1v1h-1zM907 727h1v1h-1zM907 728h4v1h-4zM911 729h1v1h-1zM911 730h1v1h-1zM911 731h1v1h-1zM907 732h4v1h-4zM913 728h5v1h-5zM919 725h3v1h-3zM921 726h1v1h-1zM921 727h1v1h-1zM921 728h1v1h-1zM921 729h1v1h-1zM921 730h1v1h-1zM921 731h1v1h-1zM919 732h5v1h-5zM925 725h4v1h-4zM925 726h1v1h-1zM925 727h1v1h-1zM925 728h4v1h-4zM929 729h1v1h-1zM929 730h1v1h-1zM929 731h1v1h-1zM925 732h4v1h-4zM937 725h3v1h-3zM939 726h1v1h-1zM939 727h1v1h-1zM939 728h1v1h-1zM939 729h1v1h-1zM939 730h1v1h-1zM939 731h1v1h-1zM937 732h5v1h-5zM944 725h3v1h-3zM943 726h1v1h-1zM947 726h1v1h-1zM947 727h1v1h-1zM947 728h1v1h-1zM946 729h1v1h-1zM945 730h1v1h-1zM944 731h1v1h-1zM943 732h5v1h-5zM949 727h1v1h-1zM949 728h1v1h-1zM949 731h1v1h-1zM949 732h1v1h-1zM958 725h2v1h-2zM957 726h1v1h-1zM959 726h1v1h-1zM956 727h1v1h-1zM959 727h1v1h-1zM956 728h1v1h-1zM959 728h1v1h-1zM955 729h1v1h-1zM959 729h1v1h-1zM955 730h6v1h-6zM959 731h1v1h-1zM959 732h1v1h-1zM962 725h3v1h-3zM961 726h1v1h-1zM961 727h1v1h-1zM961 728h4v1h-4zM961 729h1v1h-1zM965 729h1v1h-1zM961 730h1v1h-1zM965 730h1v1h-1zM961 731h1v1h-1zM965 731h1v1h-1zM962 732h3v1h-3zM967 727h1v1h-1zM967 728h1v1h-1zM967 731h1v1h-1zM967 732h1v1h-1zM973 725h4v1h-4zM973 726h1v1h-1zM973 727h1v1h-1zM973 728h4v1h-4zM977 729h1v1h-1zM977 730h1v1h-1zM977 731h1v1h-1zM973 732h4v1h-4zM979 725h5v1h-5zM983 726h1v1h-1zM983 727h1v1h-1zM982 728h1v1h-1zM982 729h1v1h-1zM981 730h1v1h-1zM981 731h1v1h-1zM981 732h1v1h-1z" fill="#000"/>
<circle cx="995.5" cy="728.5" r="7" fill="#505050" shape-rendering="auto"/><circle cx="995.5" cy="728.5" r="5.5" fill="#e0e0e0" shape-rendering="auto"/><circle cx="995.5" cy="728.5" r="4.2" fill="#404040" shape-rendering="auto"/><circle cx="995.5" cy="728.5" r="3.3" fill="#10d010" shape-rendering="auto"/>
<rect x="0" y="713" width="166" height="24" fill="#ece9d8" />
<rect x="0" y="713" width="166" height="1" fill="#fff" />
<rect x="165" y="713" width="1" height="24" fill="#808080" />
<rect x="0" y="736" width="166" height="1" fill="#808080" />
<rect x="4" y="716" width="1" height="19" fill="#fff" />
<rect x="5" y="716" width="1" height="19" fill="#a0a0a0" />
<rect x="8" y="716" width="1" height="19" fill="#fff" />
<rect x="9" y="716" width="1" height="19" fill="#a0a0a0" />
<path d="M38 717h1v1h-1zM38 718h1v1h-1zM38 719h1v1h-1zM38 720h1v1h-1zM33 721h11v1h-11zM33 722h1v1h-1zM38 722h1v1h-1zM43 722h1v1h-1zM33 723h1v1h-1zM38 723h1v1h-1zM43 723h1v1h-1zM33 724h1v1h-1zM38 724h1v1h-1zM43 724h1v1h-1zM33 725h1v1h-1zM38 725h1v1h-1zM43 725h1v1h-1zM33 726h1v1h-1zM38 726h1v1h-1zM43 726h1v1h-1zM33 727h11v1h-11zM33 728h1v1h-1zM38 728h1v1h-1zM43 728h1v1h-1zM38 729h1v1h-1zM38 730h1v1h-1zM38 731h1v1h-1zM38 732h1v1h-1zM90 717h1v1h-1zM97 717h1v1h-1zM90 718h6v1h-6zM97 718h6v1h-6zM89 719h1v1h-1zM92 719h1v1h-1zM96 719h1v1h-1zM99 719h1v1h-1zM88 720h1v1h-1zM93 720h1v1h-1zM95 720h1v1h-1zM100 720h1v1h-1zM91 721h1v1h-1zM92 722h1v1h-1zM94 722h7v1h-7zM90 723h1v1h-1zM100 723h1v1h-1zM90 724h1v1h-1zM93 724h5v1h-5zM100 724h1v1h-1zM90 725h1v1h-1zM93 725h1v1h-1zM97 725h1v1h-1zM100 725h1v1h-1zM90 726h1v1h-1zM93 726h1v1h-1zM97 726h1v1h-1zM100 726h1v1h-1zM90 727h1v1h-1zM93 727h5v1h-5zM100 727h1v1h-1zM90 728h1v1h-1zM93 728h1v1h-1zM97 728h1v1h-1zM100 728h1v1h-1zM90 729h1v1h-1zM93 729h1v1h-1zM97 729h1v1h-1zM100 729h1v1h-1zM90 730h1v1h-1zM93 730h5v1h-5zM100 730h1v1h-1zM90 731h1v1h-1zM100 731h1v1h-1zM90 732h1v1h-1zM99 732h2v1h-2z" fill="#800000"/>
<path d="M38 717h1v1h-1zM38 718h1v1h-1zM38 719h1v1h-1zM38 720h1v1h-1zM33 721h11v1h-11zM33 722h1v1h-1zM38 722h1v1h-1zM43 722h1v1h-1zM33 723h1v1h-1zM38 723h1v1h-1zM43 723h1v1h-1zM33 724h1v1h-1zM38 724h1v1h-1zM43 724h1v1h-1zM33 725h1v1h-1zM38 725h1v1h-1zM43 725h1v1h-1zM33 726h1v1h-1zM38 726h1v1h-1zM43 726h1v1h-1zM33 727h11v1h-11zM33 728h1v1h-1zM38 728h1v1h-1zM43 728h1v1h-1zM38 729h1v1h-1zM38 730h1v1h-1zM38 731h1v1h-1zM38 732h1v1h-1zM90 717h1v1h-1zM97 717h1v1h-1zM90 718h6v1h-6zM97 718h6v1h-6zM89 719h1v1h-1zM92 719h1v1h-1zM96 719h1v1h-1zM99 719h1v1h-1zM88 720h1v1h-1zM93 720h1v1h-1zM95 720h1v1h-1zM100 720h1v1h-1zM91 721h1v1h-1zM92 722h1v1h-1zM94 722h7v1h-7zM90 723h1v1h-1zM100 723h1v1h-1zM90 724h1v1h-1zM93 724h5v1h-5zM100 724h1v1h-1zM90 725h1v1h-1zM93 725h1v1h-1zM97 725h1v1h-1zM100 725h1v1h-1zM90 726h1v1h-1zM93 726h1v1h-1zM97 726h1v1h-1zM100 726h1v1h-1zM90 727h1v1h-1zM93 727h5v1h-5zM100 727h1v1h-1zM90 728h1v1h-1zM93 728h1v1h-1zM97 728h1v1h-1zM100 728h1v1h-1zM90 729h1v1h-1zM93 729h1v1h-1zM97 729h1v1h-1zM100 729h1v1h-1zM90 730h1v1h-1zM93 730h5v1h-5zM100 730h1v1h-1zM90 731h1v1h-1zM100 731h1v1h-1zM90 732h1v1h-1zM99 732h2v1h-2z" fill="#800000" transform="translate(0.7 0)"/>
<path d="M12.5 731v1.5h3M25.5 718.5h3v2" stroke="#800000" fill="none"/>
<path d="M16 721h1v1h-1zM21 721h1v1h-1zM15 722h10v1h-10zM14 723h2v1h-2zM17 723h1v1h-1zM19 723h1v1h-1zM21 723h1v1h-1zM23 723h1v1h-1zM15 724h6v1h-6zM22 724h1v1h-1zM15 725h1v1h-1zM17 725h1v1h-1zM19 725h1v1h-1zM21 725h1v1h-1zM23 725h1v1h-1zM15 726h4v1h-4zM20 726h1v1h-1zM24 726h1v1h-1zM17 727h5v1h-5zM18 728h1v1h-1zM22 728h1v1h-1zM15 729h7v1h-7zM23 729h1v1h-1zM16 730h1v1h-1zM19 730h1v1h-1zM22 730h1v1h-1zM14 731h2v1h-2zM18 731h2v1h-2zM23 731h2v1h-2z" fill="#800000"/>
<path d="M59.5 718.2A6 6 0 1 1 52.2 725.5A5.5 5.5 0 0 0 59.5 718.2z" fill="#ffe800" stroke="#000" stroke-width="0.9" shape-rendering="auto"/>
<circle cx="75.5" cy="723" r="2" fill="none" stroke="#800000" stroke-width="1.2" shape-rendering="auto"/><path d="M81.5 728l-1.5 3.5" stroke="#800000" stroke-width="1.8" shape-rendering="auto"/>
<rect x="106.5" y="720.5" width="16" height="9" fill="#fff" stroke="#000"/>
<path d="M108 722.5h13M108 725h13M108 727.5h13" stroke="#000" stroke-width="1"/><path d="M110.5 722v6M113.5 722v6M116.5 722v6M119.5 722v6" stroke="#fff" stroke-width="1"/>
<path d="M128 725h12v6.5h-12z" fill="#ffe800" stroke="#000" shape-rendering="auto"/><circle cx="137" cy="721" r="4" fill="#b0c8ff" stroke="#000" shape-rendering="auto"/><path d="M129 718l4 6" stroke="#e00000" stroke-width="2" shape-rendering="auto"/>
<rect x="144.5" y="719.5" width="12" height="12" fill="#fff" stroke="#000"/>
<rect x="145" y="720" width="11" height="3" fill="#0000a0" />
<path d="M147 724h7M147 726h7M147 728h7" stroke="#000" stroke-width="0.8"/>
<path d="M153.5 723v10l2.5-2.5 2.5 4.5 1.5-1-2.5-4h3.5z" fill="#fff" stroke="#000" shape-rendering="auto"/>
<rect x="0" y="738" width="1024" height="4" fill="#2a5cd8" />
<rect x="0" y="738" width="1024" height="1" fill="#5a88e8" />
<rect x="0" y="738" width="93" height="4" fill="#3c9a3c" />
<rect x="2" y="740" width="87" height="2" fill="#7cc47c" />
<rect x="912" y="738" width="112" height="4" fill="#1ea0e8" />
<rect x="900" y="0.5" width="122" height="33" rx="4" fill="#8c9ee0" shape-rendering="auto"/>
<rect x="903" y="30" width="115" height="3" fill="#b8c8f0" />
<path d="M905.2 10.0h16l-8 13.5z" fill="#000" shape-rendering="auto"/>
<path d="M906 8.8h16l-8 13.5z" fill="#1414e6" shape-rendering="auto"/>
<path d="M907.3 9.9h13.4l-6.7 11.2z" fill="#fff" shape-rendering="auto"/>
<path d="M910.3 11.4h2.2l-0.3 4zM917.7 11.4h-2.2l0.3 4z" fill="#1414e6" shape-rendering="auto"/>
<rect x="913.4" y="11.0" width="1.2" height="8" fill="#1414e6" />
<text x="926" y="21" font-family="Liberation Sans" font-size="11" font-weight="bold" fill="#e8ecff" text-anchor="start" textLength="8" lengthAdjust="spacingAndGlyphs" >V</text>
<rect x="936" y="19" width="2" height="2" fill="#e8ecff" />
<rect x="944" y="19" width="2" height="2" fill="#e8ecff" />
<rect x="951" y="7" width="19" height="19" rx="2" fill="#4f7be0" stroke="#c0d0ff" shape-rendering="auto"/>
<rect x="956" y="19" width="9" height="3" fill="#fff" />
<rect x="974" y="7" width="19" height="19" rx="2" fill="#7d94dc" stroke="#a8b8f0" shape-rendering="auto"/>
<rect x="979" y="12" width="9" height="8" fill="none" stroke="#a8b8f0"/>
<rect x="997" y="7" width="19" height="19" rx="2" fill="#b27d9a" stroke="#c8a8c0" shape-rendering="auto"/>
<rect x="1003" y="12" width="18" height="21" fill="#ece9d8" />
<rect x="1004" y="13" width="16" height="19" fill="url(#dots)" opacity="0.5"/>
</svg></body></html>
